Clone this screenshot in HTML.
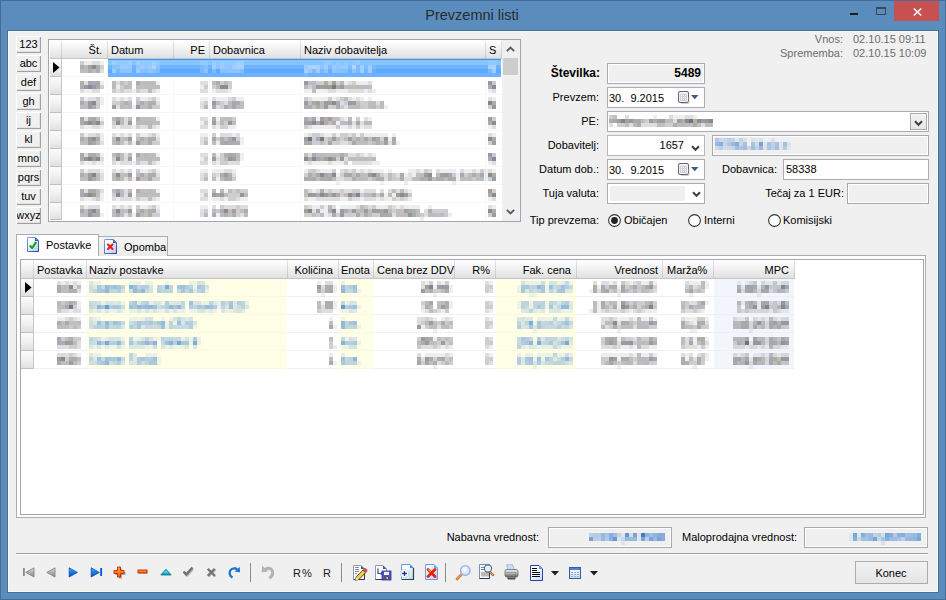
<!DOCTYPE html>
<html><head><meta charset="utf-8"><style>
html,body{margin:0;padding:0;}
body{width:946px;height:600px;position:relative;overflow:hidden;font-family:"Liberation Sans",sans-serif;font-size:11px;}
div{position:absolute;box-sizing:border-box;}
.t{white-space:pre;}
svg{overflow:visible;}
</style></head><body>
<div style="left:0px;top:0px;width:946px;height:600px;background:#5a8dbe;box-shadow:inset 0 0 0 1px #466e95;"></div>
<div class="t" style="left:272px;width:400px;text-align:center;top:7px;line-height:17px;font-size:15px;color:#2b2b2b;font-size:14.5px;">Prevzemni listi</div>
<div style="left:894px;top:1px;width:45px;height:20px;background:#c75050;"></div>
<svg style="position:absolute;left:913px;top:8px" width="9" height="8"><path d="M0.8 0.5L8.2 7.5M8.2 0.5L0.8 7.5" stroke="#fff" stroke-width="1.5"/></svg>
<div style="left:876px;top:7px;width:10px;height:8px;border:1px solid #36485a;border-top-width:2px;box-sizing:border-box;"></div>
<div style="left:850px;top:13px;width:8px;height:2px;background:#1e1e1e;"></div>
<div style="left:7px;top:30px;width:932px;height:563px;background:#44709c;"></div>
<div style="left:8px;top:31px;width:930px;height:561px;background:#f0f0f0;box-shadow:inset 0 0 0 1px #f8f8f8;"></div>
<div style="left:16px;top:36px;width:25px;height:17px;background:#f0f0f0;box-shadow:inset 1px 1px 0 #fff, inset -1px -1px 0 #a0a0a0, inset -2px -2px 0 #e3e3e3;overflow:hidden;"></div>
<div style="left:17px;top:37px;width:23px;height:15px;overflow:hidden"><div class="t" style="left:-188.5px;width:400px;text-align:center;top:1px;line-height:12px;font-size:11px;color:#000">123</div></div>
<div style="left:16px;top:55px;width:25px;height:17px;background:#f0f0f0;box-shadow:inset 1px 1px 0 #fff, inset -1px -1px 0 #a0a0a0, inset -2px -2px 0 #e3e3e3;overflow:hidden;"></div>
<div style="left:17px;top:56px;width:23px;height:15px;overflow:hidden"><div class="t" style="left:-188.5px;width:400px;text-align:center;top:1px;line-height:12px;font-size:11px;color:#000">abc</div></div>
<div style="left:16px;top:74px;width:25px;height:17px;background:#f0f0f0;box-shadow:inset 1px 1px 0 #fff, inset -1px -1px 0 #a0a0a0, inset -2px -2px 0 #e3e3e3;overflow:hidden;"></div>
<div style="left:17px;top:75px;width:23px;height:15px;overflow:hidden"><div class="t" style="left:-188.5px;width:400px;text-align:center;top:1px;line-height:12px;font-size:11px;color:#000">def</div></div>
<div style="left:16px;top:93px;width:25px;height:17px;background:#f0f0f0;box-shadow:inset 1px 1px 0 #fff, inset -1px -1px 0 #a0a0a0, inset -2px -2px 0 #e3e3e3;overflow:hidden;"></div>
<div style="left:17px;top:94px;width:23px;height:15px;overflow:hidden"><div class="t" style="left:-188.5px;width:400px;text-align:center;top:1px;line-height:12px;font-size:11px;color:#000">gh</div></div>
<div style="left:16px;top:112px;width:25px;height:17px;background:#f0f0f0;box-shadow:inset 1px 1px 0 #fff, inset -1px -1px 0 #a0a0a0, inset -2px -2px 0 #e3e3e3;overflow:hidden;"></div>
<div style="left:17px;top:113px;width:23px;height:15px;overflow:hidden"><div class="t" style="left:-188.5px;width:400px;text-align:center;top:1px;line-height:12px;font-size:11px;color:#000">ij</div></div>
<div style="left:16px;top:131px;width:25px;height:17px;background:#f0f0f0;box-shadow:inset 1px 1px 0 #fff, inset -1px -1px 0 #a0a0a0, inset -2px -2px 0 #e3e3e3;overflow:hidden;"></div>
<div style="left:17px;top:132px;width:23px;height:15px;overflow:hidden"><div class="t" style="left:-188.5px;width:400px;text-align:center;top:1px;line-height:12px;font-size:11px;color:#000">kl</div></div>
<div style="left:16px;top:150px;width:25px;height:17px;background:#f0f0f0;box-shadow:inset 1px 1px 0 #fff, inset -1px -1px 0 #a0a0a0, inset -2px -2px 0 #e3e3e3;overflow:hidden;"></div>
<div style="left:17px;top:151px;width:23px;height:15px;overflow:hidden"><div class="t" style="left:-188.5px;width:400px;text-align:center;top:1px;line-height:12px;font-size:11px;color:#000">mno</div></div>
<div style="left:16px;top:169px;width:25px;height:17px;background:#f0f0f0;box-shadow:inset 1px 1px 0 #fff, inset -1px -1px 0 #a0a0a0, inset -2px -2px 0 #e3e3e3;overflow:hidden;"></div>
<div style="left:17px;top:170px;width:23px;height:15px;overflow:hidden"><div class="t" style="left:-188.5px;width:400px;text-align:center;top:1px;line-height:12px;font-size:11px;color:#000">pqrs</div></div>
<div style="left:16px;top:188px;width:25px;height:17px;background:#f0f0f0;box-shadow:inset 1px 1px 0 #fff, inset -1px -1px 0 #a0a0a0, inset -2px -2px 0 #e3e3e3;overflow:hidden;"></div>
<div style="left:17px;top:189px;width:23px;height:15px;overflow:hidden"><div class="t" style="left:-188.5px;width:400px;text-align:center;top:1px;line-height:12px;font-size:11px;color:#000">tuv</div></div>
<div style="left:16px;top:207px;width:25px;height:17px;background:#f0f0f0;box-shadow:inset 1px 1px 0 #fff, inset -1px -1px 0 #a0a0a0, inset -2px -2px 0 #e3e3e3;overflow:hidden;"></div>
<div style="left:17px;top:208px;width:23px;height:15px;overflow:hidden"><div class="t" style="left:-188.5px;width:400px;text-align:center;top:1px;line-height:12px;font-size:11px;color:#000">wxyz</div></div>
<div style="left:48px;top:39px;width:473px;height:183px;background:#fff;border:1px solid #a3a6ae;box-sizing:border-box;"></div>
<div style="left:50px;top:41px;width:452px;height:17px;background:linear-gradient(#ffffff,#f4f4f4 40%,#e0e0e0);"></div>
<div style="left:50px;top:58px;width:452px;height:1px;background:#c5c5c5;"></div>
<div style="left:61px;top:41px;width:1px;height:17px;background:linear-gradient(#e6e6e6,#c5c5c5);"></div>
<div style="left:107px;top:41px;width:1px;height:17px;background:linear-gradient(#e6e6e6,#c5c5c5);"></div>
<div style="left:173px;top:41px;width:1px;height:17px;background:linear-gradient(#e6e6e6,#c5c5c5);"></div>
<div style="left:209px;top:41px;width:1px;height:17px;background:linear-gradient(#e6e6e6,#c5c5c5);"></div>
<div style="left:300px;top:41px;width:1px;height:17px;background:linear-gradient(#e6e6e6,#c5c5c5);"></div>
<div style="left:485px;top:41px;width:1px;height:17px;background:linear-gradient(#e6e6e6,#c5c5c5);"></div>
<div style="left:501px;top:41px;width:1px;height:17px;background:linear-gradient(#e6e6e6,#c5c5c5);"></div>
<div style="left:50px;top:59px;width:11px;height:18px;background:linear-gradient(#fbfbfb,#f0f0f0 50%,#dedede);box-shadow:inset 0 -1px 0 #c0c0c0;"></div>
<div style="left:50px;top:77px;width:11px;height:18px;background:linear-gradient(#fbfbfb,#f0f0f0 50%,#dedede);box-shadow:inset 0 -1px 0 #c0c0c0;"></div>
<div style="left:50px;top:95px;width:11px;height:18px;background:linear-gradient(#fbfbfb,#f0f0f0 50%,#dedede);box-shadow:inset 0 -1px 0 #c0c0c0;"></div>
<div style="left:50px;top:113px;width:11px;height:18px;background:linear-gradient(#fbfbfb,#f0f0f0 50%,#dedede);box-shadow:inset 0 -1px 0 #c0c0c0;"></div>
<div style="left:50px;top:131px;width:11px;height:18px;background:linear-gradient(#fbfbfb,#f0f0f0 50%,#dedede);box-shadow:inset 0 -1px 0 #c0c0c0;"></div>
<div style="left:50px;top:149px;width:11px;height:18px;background:linear-gradient(#fbfbfb,#f0f0f0 50%,#dedede);box-shadow:inset 0 -1px 0 #c0c0c0;"></div>
<div style="left:50px;top:167px;width:11px;height:18px;background:linear-gradient(#fbfbfb,#f0f0f0 50%,#dedede);box-shadow:inset 0 -1px 0 #c0c0c0;"></div>
<div style="left:50px;top:185px;width:11px;height:18px;background:linear-gradient(#fbfbfb,#f0f0f0 50%,#dedede);box-shadow:inset 0 -1px 0 #c0c0c0;"></div>
<div style="left:50px;top:203px;width:11px;height:17px;background:linear-gradient(#fbfbfb,#f0f0f0 50%,#dedede);box-shadow:inset 0 -1px 0 #c0c0c0;"></div>
<div style="left:61px;top:59px;width:1px;height:161px;background:#c5c5c5;"></div>
<div style="left:62px;top:76px;width:440px;height:1px;background:#f6f6f6;"></div>
<div style="left:62px;top:94px;width:440px;height:1px;background:#f6f6f6;"></div>
<div style="left:62px;top:112px;width:440px;height:1px;background:#f6f6f6;"></div>
<div style="left:62px;top:130px;width:440px;height:1px;background:#f6f6f6;"></div>
<div style="left:62px;top:148px;width:440px;height:1px;background:#f6f6f6;"></div>
<div style="left:62px;top:166px;width:440px;height:1px;background:#f6f6f6;"></div>
<div style="left:62px;top:184px;width:440px;height:1px;background:#f6f6f6;"></div>
<div style="left:62px;top:202px;width:440px;height:1px;background:#f6f6f6;"></div>
<div style="left:49px;top:40px;width:471px;height:1px;background:#fff;"></div>
<div style="left:107px;top:59px;width:1px;height:162px;background:#f7f7f7;"></div>
<div style="left:173px;top:59px;width:1px;height:162px;background:#f7f7f7;"></div>
<div style="left:209px;top:59px;width:1px;height:162px;background:#f7f7f7;"></div>
<div style="left:300px;top:59px;width:1px;height:162px;background:#f7f7f7;"></div>
<div style="left:485px;top:59px;width:1px;height:162px;background:#f7f7f7;"></div>
<div style="left:108px;top:59px;width:393px;height:18px;background:linear-gradient(#3399ff 0,#3399ff 1px,#88c4ff 1px,#88c4ff 6px,#70b4ff 6px,#70b4ff 10px,#5cabff 10px,#5cabff 14px,#6eb2ff 14px);"></div>
<svg style="position:absolute;left:53px;top:62px" width="7" height="12"><path d="M0 0L6.5 5.5L0 11z" fill="#000"/></svg>
<div class="t" style="left:-298px;width:400px;text-align:right;top:44px;line-height:12px;font-size:11px;color:#000;">Št.</div>
<div class="t" style="left:111px;top:44px;line-height:12px;font-size:11px;color:#000;">Datum</div>
<div class="t" style="left:-195px;width:400px;text-align:right;top:44px;line-height:12px;font-size:11px;color:#000;">PE</div>
<div class="t" style="left:213px;top:44px;line-height:12px;font-size:11px;color:#000;">Dobavnica</div>
<div class="t" style="left:304px;top:44px;line-height:12px;font-size:11px;color:#000;">Naziv dobavitelja</div>
<div class="t" style="left:489px;top:44px;line-height:12px;font-size:11px;color:#000;">S</div>
<div style="left:502px;top:40px;width:18px;height:181px;background:#f0f0f0;"></div>
<div style="left:503px;top:58px;width:15px;height:17px;background:#cdcdcd;"></div>
<svg style="position:absolute;left:506px;top:46px" width="9" height="6"><path d="M0.8 5.2L4.5 1.5L8.2 5.2" stroke="#5a5a5a" stroke-width="1.8" fill="none"/></svg>
<svg style="position:absolute;left:506px;top:209px" width="9" height="6"><path d="M0.8 0.8L4.5 4.5L8.2 0.8" stroke="#5a5a5a" stroke-width="1.8" fill="none"/></svg>
<div class="t" style="left:443px;width:400px;text-align:right;top:33px;line-height:12px;font-size:11px;color:#6d6d6d;">Vnos:</div>
<div class="t" style="left:853px;top:33px;line-height:12px;font-size:11px;color:#6d6d6d;">02.10.15 09:11</div>
<div class="t" style="left:443px;width:400px;text-align:right;top:47px;line-height:12px;font-size:11px;color:#6d6d6d;">Sprememba:</div>
<div class="t" style="left:853px;top:47px;line-height:12px;font-size:11px;color:#6d6d6d;">02.10.15 10:09</div>
<div class="t" style="left:200px;width:400px;text-align:right;top:66px;line-height:14px;font-size:12px;color:#000;font-weight:bold;">Številka:</div>
<div class="t" style="left:199px;width:400px;text-align:right;top:91px;line-height:12px;font-size:11px;color:#000;">Prevzem:</div>
<div class="t" style="left:199px;width:400px;text-align:right;top:115px;line-height:12px;font-size:11px;color:#000;">PE:</div>
<div class="t" style="left:199px;width:400px;text-align:right;top:139px;line-height:12px;font-size:11px;color:#000;">Dobavitelj:</div>
<div class="t" style="left:199px;width:400px;text-align:right;top:163px;line-height:12px;font-size:11px;color:#000;">Datum dob.:</div>
<div class="t" style="left:199px;width:400px;text-align:right;top:187px;line-height:12px;font-size:11px;color:#000;">Tuja valuta:</div>
<div class="t" style="left:199px;width:400px;text-align:right;top:214px;line-height:12px;font-size:11px;color:#000;">Tip prevzema:</div>
<div style="left:607px;top:63px;width:98px;height:21px;background:#f0f0f0;border:1px solid #a9a9b0;box-sizing:border-box;box-shadow:inset 0 0 0 1px #fff;"></div>
<div class="t" style="left:301px;width:400px;text-align:right;top:66px;line-height:14px;font-size:12px;color:#000;font-weight:bold;">5489</div>
<div style="left:607px;top:87px;width:98px;height:21px;background:#fff;border:1px solid #abadb3;box-sizing:border-box;"></div>
<div class="t" style="left:609px;top:92px;line-height:12px;font-size:11px;color:#000;">30.&nbsp; 9.2015</div>
<svg style="position:absolute;left:678px;top:91px" width="13" height="13"><rect x="0.5" y="0.5" width="10" height="11" rx="1.5" fill="#eef2f8" stroke="#6f6461"/><rect x="2" y="3" width="7" height="7" fill="#d0d4dc"/><g fill="#fff"><rect x="3" y="4" width="1" height="1"/><rect x="5" y="4" width="1" height="1"/><rect x="7" y="4" width="1" height="1"/><rect x="3" y="6" width="1" height="1"/><rect x="5" y="6" width="1" height="1"/><rect x="7" y="6" width="1" height="1"/><rect x="3" y="8" width="1" height="1"/><rect x="5" y="8" width="1" height="1"/><rect x="7" y="8" width="1" height="1"/></g><path d="M11 6v5.5q0 1-1 1h-7" stroke="#b0b0b0" fill="none" opacity="0.6"/></svg>
<svg style="position:absolute;left:691px;top:95px" width="8" height="5"><path d="M0 0h7.5L3.75 4.2z" fill="#3f5a82"/></svg>
<div style="left:607px;top:111px;width:322px;height:21px;background:#fff;border:1px solid #abadb3;box-sizing:border-box;"></div>
<div style="left:910px;top:113px;width:17px;height:17px;background:linear-gradient(#f2f2f2,#e6e6e6);border:1px solid #acacac;box-sizing:border-box;"></div>
<svg style="position:absolute;left:914px;top:120px" width="9" height="7"><path d="M1 1.2L4.5 4.8L8 1.2" stroke="#404040" stroke-width="2" fill="none"/></svg>
<div style="left:607px;top:135px;width:98px;height:21px;background:#fff;border:1px solid #b9b9b9;box-sizing:border-box;"></div>
<div class="t" style="left:284px;width:400px;text-align:right;top:139px;line-height:12px;font-size:11px;color:#000;">1657</div>
<svg style="position:absolute;left:691px;top:145px" width="9" height="7"><path d="M1 1.2L4.5 4.8L8 1.2" stroke="#404040" stroke-width="2" fill="none"/></svg>
<div style="left:712px;top:135px;width:217px;height:21px;background:#f0f0f0;border:1px solid #a9a9b0;box-sizing:border-box;box-shadow:inset 0 0 0 1px #fff;"></div>
<div style="left:607px;top:159px;width:98px;height:21px;background:#fff;border:1px solid #abadb3;box-sizing:border-box;"></div>
<div class="t" style="left:609px;top:164px;line-height:12px;font-size:11px;color:#000;">30.&nbsp; 9.2015</div>
<svg style="position:absolute;left:678px;top:163px" width="13" height="13"><rect x="0.5" y="0.5" width="10" height="11" rx="1.5" fill="#eef2f8" stroke="#6f6461"/><rect x="2" y="3" width="7" height="7" fill="#d0d4dc"/><g fill="#fff"><rect x="3" y="4" width="1" height="1"/><rect x="5" y="4" width="1" height="1"/><rect x="7" y="4" width="1" height="1"/><rect x="3" y="6" width="1" height="1"/><rect x="5" y="6" width="1" height="1"/><rect x="7" y="6" width="1" height="1"/><rect x="3" y="8" width="1" height="1"/><rect x="5" y="8" width="1" height="1"/><rect x="7" y="8" width="1" height="1"/></g><path d="M11 6v5.5q0 1-1 1h-7" stroke="#b0b0b0" fill="none" opacity="0.6"/></svg>
<svg style="position:absolute;left:691px;top:167px" width="8" height="5"><path d="M0 0h7.5L3.75 4.2z" fill="#3f5a82"/></svg>
<div class="t" style="left:377px;width:400px;text-align:right;top:163px;line-height:12px;font-size:11px;color:#000;">Dobavnica:</div>
<div style="left:783px;top:159px;width:146px;height:21px;background:#fff;border:1px solid #abadb3;box-sizing:border-box;"></div>
<div class="t" style="left:786px;top:163px;line-height:12px;font-size:11px;color:#000;">58338</div>
<div style="left:607px;top:183px;width:98px;height:21px;background:#fff;border:1px solid #abadb3;box-sizing:border-box;"></div>
<div style="left:610px;top:186px;width:75px;height:15px;background:#f0f0f0;"></div>
<svg style="position:absolute;left:692px;top:191px" width="9" height="7"><path d="M1 1.2L4.5 4.8L8 1.2" stroke="#404040" stroke-width="2" fill="none"/></svg>
<div class="t" style="left:444px;width:400px;text-align:right;top:187px;line-height:12px;font-size:11px;color:#000;">Tečaj za 1 EUR:</div>
<div style="left:847px;top:183px;width:82px;height:21px;background:#f0f0f0;border:1px solid #a9a9b0;box-sizing:border-box;box-shadow:inset 0 0 0 1px #fff;"></div>
<svg style="position:absolute;left:608px;top:214px" width="13" height="13"><circle cx="6.5" cy="6.5" r="5.9" fill="#fff" stroke="#333" stroke-width="1.1"/><circle cx="6.5" cy="6.5" r="3.4" fill="#222"/></svg>
<div class="t" style="left:624px;top:214px;line-height:12px;font-size:11px;color:#000;">Običajen</div>
<svg style="position:absolute;left:688px;top:214px" width="13" height="13"><circle cx="6.5" cy="6.5" r="5.9" fill="#fff" stroke="#333" stroke-width="1.1"/></svg>
<div class="t" style="left:704px;top:214px;line-height:12px;font-size:11px;color:#000;">Interni</div>
<svg style="position:absolute;left:768px;top:214px" width="13" height="13"><circle cx="6.5" cy="6.5" r="5.9" fill="#fff" stroke="#333" stroke-width="1.1"/></svg>
<div class="t" style="left:783px;top:214px;line-height:12px;font-size:11px;color:#000;">Komisijski</div>
<div style="left:16px;top:255px;width:910px;height:263px;background:#fff;border:1px solid #adadad;box-sizing:border-box;"></div>
<div style="left:98px;top:236px;width:70px;height:20px;background:linear-gradient(#f3f3f3,#ebebeb);border:1px solid #adadad;border-bottom:none;box-sizing:border-box;"></div>
<div style="left:16px;top:234px;width:83px;height:22px;background:#fff;border:1px solid #adadad;border-bottom:none;box-sizing:border-box;"></div>
<div style="left:17px;top:255px;width:81px;height:1px;background:#fff;"></div>
<svg style="position:absolute;left:27px;top:237px" width="12" height="15"><defs><linearGradient id="dgcheck" x1="0" y1="0" x2="1" y2="1"><stop offset="0.2" stop-color="#ffffff"/><stop offset="1" stop-color="#a8ccf8"/></linearGradient><linearGradient id="dgchecks" x1="0" y1="0" x2="1" y2="1"><stop offset="0" stop-color="#78a8f0"/><stop offset="1" stop-color="#383a90"/></linearGradient></defs><path d="M0.5 0.5H8.5L11.5 3.5V14.5H0.5Z" fill="url(#dgcheck)" stroke="url(#dgchecks)"/><path d="M8 0.5L11.5 4H8Z" fill="#3a4a9a"/><path d="M8.8 1.5L10 2.8H8.8Z" fill="#a0c8f8"/><path d="M2.8 8.6L5.2 11L9.2 5" stroke="#18a018" stroke-width="2.2" fill="none" stroke-linejoin="round"/></svg>
<div class="t" style="left:46px;top:239px;line-height:12px;font-size:11px;color:#000;">Postavke</div>
<svg style="position:absolute;left:104px;top:239px" width="13" height="15"><defs><linearGradient id="dgx" x1="0" y1="0" x2="1" y2="1"><stop offset="0.2" stop-color="#ffffff"/><stop offset="1" stop-color="#a8ccf8"/></linearGradient><linearGradient id="dgxs" x1="0" y1="0" x2="1" y2="1"><stop offset="0" stop-color="#78a8f0"/><stop offset="1" stop-color="#383a90"/></linearGradient></defs><path d="M0.5 0.5H9.5L12.5 3.5V14.5H0.5Z" fill="url(#dgx)" stroke="url(#dgxs)"/><path d="M9 0.5L12.5 4H9Z" fill="#3a4a9a"/><path d="M9.8 1.5L11 2.8H9.8Z" fill="#a0c8f8"/><path d="M4 5.5L8.5 10M8.5 5.5L4 10" stroke="#f01818" stroke-width="2.1" fill="none" stroke-linecap="round"/></svg>
<div class="t" style="left:124px;top:241px;line-height:12px;font-size:11px;color:#000;">Opomba</div>
<div style="left:20px;top:259px;width:904px;height:256px;background:#fff;border:1px solid #a3a6ae;box-sizing:border-box;"></div>
<div style="left:21px;top:260px;width:774px;height:18px;background:linear-gradient(#ffffff,#f4f4f4 40%,#e0e0e0);"></div>
<div style="left:21px;top:278px;width:774px;height:1px;background:#c5c5c5;"></div>
<div style="left:33px;top:260px;width:1px;height:18px;background:linear-gradient(#e6e6e6,#c5c5c5);"></div>
<div style="left:86px;top:260px;width:1px;height:18px;background:linear-gradient(#e6e6e6,#c5c5c5);"></div>
<div style="left:287px;top:260px;width:1px;height:18px;background:linear-gradient(#e6e6e6,#c5c5c5);"></div>
<div style="left:338px;top:260px;width:1px;height:18px;background:linear-gradient(#e6e6e6,#c5c5c5);"></div>
<div style="left:373px;top:260px;width:1px;height:18px;background:linear-gradient(#e6e6e6,#c5c5c5);"></div>
<div style="left:454px;top:260px;width:1px;height:18px;background:linear-gradient(#e6e6e6,#c5c5c5);"></div>
<div style="left:495px;top:260px;width:1px;height:18px;background:linear-gradient(#e6e6e6,#c5c5c5);"></div>
<div style="left:576px;top:260px;width:1px;height:18px;background:linear-gradient(#e6e6e6,#c5c5c5);"></div>
<div style="left:662px;top:260px;width:1px;height:18px;background:linear-gradient(#e6e6e6,#c5c5c5);"></div>
<div style="left:713px;top:260px;width:1px;height:18px;background:linear-gradient(#e6e6e6,#c5c5c5);"></div>
<div style="left:794px;top:260px;width:1px;height:18px;background:linear-gradient(#e6e6e6,#c5c5c5);"></div>
<div style="left:21px;top:279px;width:12px;height:18px;background:linear-gradient(#fbfbfb,#f0f0f0 50%,#dedede);box-shadow:inset 0 -1px 0 #c0c0c0;"></div>
<div style="left:21px;top:297px;width:12px;height:18px;background:linear-gradient(#fbfbfb,#f0f0f0 50%,#dedede);box-shadow:inset 0 -1px 0 #c0c0c0;"></div>
<div style="left:21px;top:315px;width:12px;height:18px;background:linear-gradient(#fbfbfb,#f0f0f0 50%,#dedede);box-shadow:inset 0 -1px 0 #c0c0c0;"></div>
<div style="left:21px;top:333px;width:12px;height:18px;background:linear-gradient(#fbfbfb,#f0f0f0 50%,#dedede);box-shadow:inset 0 -1px 0 #c0c0c0;"></div>
<div style="left:21px;top:351px;width:12px;height:18px;background:linear-gradient(#fbfbfb,#f0f0f0 50%,#dedede);box-shadow:inset 0 -1px 0 #c0c0c0;"></div>
<div style="left:33px;top:279px;width:1px;height:90px;background:#c5c5c5;"></div>
<div style="left:34px;top:296px;width:761px;height:1px;background:#f6f6f6;"></div>
<div style="left:34px;top:314px;width:761px;height:1px;background:#f6f6f6;"></div>
<div style="left:34px;top:332px;width:761px;height:1px;background:#f6f6f6;"></div>
<div style="left:34px;top:350px;width:761px;height:1px;background:#f6f6f6;"></div>
<div style="left:34px;top:368px;width:761px;height:1px;background:#f6f6f6;"></div>
<div style="left:87px;top:279px;width:200px;height:90px;background:#ffffe8;"></div>
<div style="left:339px;top:279px;width:34px;height:90px;background:#ffffe8;"></div>
<div style="left:496px;top:279px;width:80px;height:90px;background:#ffffe8;"></div>
<div style="left:714px;top:279px;width:80px;height:90px;background:#f2f6fc;"></div>
<div style="left:34px;top:296px;width:760px;height:1px;background:rgba(0,0,0,0.025);"></div>
<div style="left:34px;top:314px;width:760px;height:1px;background:rgba(0,0,0,0.025);"></div>
<div style="left:34px;top:332px;width:760px;height:1px;background:rgba(0,0,0,0.025);"></div>
<div style="left:34px;top:350px;width:760px;height:1px;background:rgba(0,0,0,0.025);"></div>
<div style="left:34px;top:368px;width:760px;height:1px;background:rgba(0,0,0,0.025);"></div>
<svg style="position:absolute;left:25px;top:282px" width="7" height="12"><path d="M0 0L6.5 5.5L0 11z" fill="#000"/></svg>
<div class="t" style="left:37px;top:264px;line-height:12px;font-size:11px;color:#000;">Postavka</div>
<div class="t" style="left:89px;top:264px;line-height:12px;font-size:11px;color:#000;">Naziv postavke</div>
<div class="t" style="left:-67px;width:400px;text-align:right;top:264px;line-height:12px;font-size:11px;color:#000;">Količina</div>
<div class="t" style="left:341px;top:264px;line-height:12px;font-size:11px;color:#000;">Enota</div>
<div class="t" style="left:377px;top:264px;line-height:12px;font-size:11px;color:#000;">Cena brez DDV</div>
<div class="t" style="left:90px;width:400px;text-align:right;top:264px;line-height:12px;font-size:11px;color:#000;">R%</div>
<div class="t" style="left:171px;width:400px;text-align:right;top:264px;line-height:12px;font-size:11px;color:#000;">Fak. cena</div>
<div class="t" style="left:258px;width:400px;text-align:right;top:264px;line-height:12px;font-size:11px;color:#000;">Vrednost</div>
<div class="t" style="left:667px;top:264px;line-height:12px;font-size:11px;color:#000;">Marža%</div>
<div class="t" style="left:389px;width:400px;text-align:right;top:264px;line-height:12px;font-size:11px;color:#000;">MPC</div>
<div class="t" style="left:139px;width:400px;text-align:right;top:531px;line-height:12px;font-size:11px;color:#000;">Nabavna vrednost:</div>
<div style="left:548px;top:527px;width:124px;height:21px;background:#f0f0f0;border:1px solid #a9a9b0;box-sizing:border-box;box-shadow:inset 0 0 0 1px #fff;"></div>
<div class="t" style="left:397px;width:400px;text-align:right;top:531px;line-height:12px;font-size:11px;color:#000;">Maloprodajna vrednost:</div>
<div style="left:804px;top:527px;width:124px;height:21px;background:#f0f0f0;border:1px solid #a9a9b0;box-sizing:border-box;box-shadow:inset 0 0 0 1px #fff;"></div>
<div style="left:16px;top:553px;width:912px;height:1px;background:#a0a0a0;"></div>
<div style="left:16px;top:554px;width:912px;height:1px;background:#ffffff;"></div>
<svg style="position:absolute;left:0px;top:0px" width="0" height="0"><defs><filter id="sh" x="-20%" y="-20%" width="160%" height="160%"><feGaussianBlur stdDeviation="0.6"/></filter><linearGradient id="gg" x1="0" y1="0" x2="0" y2="1"><stop offset="0" stop-color="#d8d8d8"/><stop offset="1" stop-color="#8a8a8a"/></linearGradient><linearGradient id="bg" x1="0" y1="0" x2="0" y2="1"><stop offset="0" stop-color="#5ab0ff"/><stop offset="0.5" stop-color="#1a78e0"/><stop offset="1" stop-color="#0050c0"/></linearGradient><linearGradient id="og" x1="0" y1="0" x2="0" y2="1"><stop offset="0" stop-color="#ffa040"/><stop offset="1" stop-color="#ff6000"/></linearGradient><radialGradient id="tg" cx="0.5" cy="0.45" r="0.5"><stop offset="0" stop-color="#40e8ff"/><stop offset="1" stop-color="#108aa8"/></radialGradient></defs></svg>
<svg style="position:absolute;left:22px;top:567px" width="14" height="11"><rect x="1" y="1" width="1.8" height="8" fill="#8c8c8c"/><path d="M12 0.8V10L3.8 5.4Z" fill="url(#gg)" stroke="#7c7c7c" stroke-width="0.8" stroke-linejoin="round"/></svg>
<svg style="position:absolute;left:45px;top:567px" width="12" height="11"><path d="M10 0.8V10L1.8 5.4Z" fill="url(#gg)" stroke="#7c7c7c" stroke-width="0.8" stroke-linejoin="round"/></svg>
<svg style="position:absolute;left:68px;top:567px" width="12" height="11"><path d="M1.2 0.8V10L9.4 5.4Z" fill="url(#bg)" stroke="#0a4cb8" stroke-width="0.8" stroke-linejoin="round"/></svg>
<svg style="position:absolute;left:90px;top:567px" width="14" height="11"><path d="M1.2 0.8V10L9.4 5.4Z" fill="url(#bg)" stroke="#0a4cb8" stroke-width="0.8" stroke-linejoin="round"/><rect x="10.2" y="1" width="1.9" height="8" fill="#0a5ad0"/></svg>
<svg style="position:absolute;left:113px;top:566px" width="13" height="13"><path d="M5 1.5h3v3.5h3.5v3h-3.5v3.5h-3v-3.5h-3.5v-3h3.5z" fill="#000" opacity="0.3" transform="translate(1,1)" filter="url(#sh)"/><path d="M4.5 1h3v3.5h3.5v3h-3.5v3.5h-3v-3.5h-3.5v-3h3.5z" fill="url(#og)" stroke="#c02800" stroke-width="0.9"/></svg>
<svg style="position:absolute;left:137px;top:569px" width="12" height="7"><rect x="1.5" y="1.5" width="9" height="3" fill="#000" opacity="0.3" filter="url(#sh)"/><rect x="1" y="1" width="9" height="3" fill="url(#og)" stroke="#c02800" stroke-width="0.9"/></svg>
<svg style="position:absolute;left:160px;top:568px" width="13" height="9"><path d="M6 1.2L11.2 7H0.8Z" fill="url(#tg)" stroke="#0a7890" stroke-width="0.8" stroke-linejoin="round"/></svg>
<svg style="position:absolute;left:182px;top:566px" width="13" height="12"><path d="M2.2 6.8L5 9.5L11 3" stroke="#000" opacity="0.25" stroke-width="2.4" fill="none" filter="url(#sh)"/><path d="M1.5 5.5L4.3 8.3L10.5 1.5" stroke="#707070" stroke-width="2.3" fill="none"/></svg>
<svg style="position:absolute;left:206px;top:567px" width="12" height="11"><path d="M2.5 2.5L9.5 9.5M9.5 2.5L2.5 9.5" stroke="#000" opacity="0.25" stroke-width="2.4" fill="none" filter="url(#sh)"/><path d="M1.7 1.7L8.7 8.7M8.7 1.7L1.7 8.7" stroke="#747474" stroke-width="2.3" fill="none"/></svg>
<svg style="position:absolute;left:228px;top:566px" width="14" height="13"><path d="M4.5 11.5C1.5 10 1 6.5 2.5 4.2C4.2 1.6 7.8 1.8 9.3 3.8" stroke="#1c74d0" stroke-width="2.3" fill="none"/><path d="M6.8 5.8L12 6.2L11.8 0.8Z" fill="#1c74d0"/></svg>
<div style="left:250px;top:563px;width:1px;height:19px;background:#8c8c8c;"></div>
<svg style="position:absolute;left:261px;top:565px" width="15" height="15"><path d="M8.2 13C11.6 11.8 12.6 7.6 10.8 5C9 2.6 5.6 2.8 4.2 4.6" stroke="#b2b2b2" stroke-width="3" fill="none"/><path d="M7.2 6.6L0.6 7.2L1.2 0.6Z" fill="#b2b2b2"/></svg>
<div class="t" style="left:293px;top:567px;line-height:12px;font-size:11px;color:#1a1a1a;letter-spacing:1px;">R%</div>
<div class="t" style="left:323px;top:567px;line-height:12px;font-size:11px;color:#1a1a1a;">R</div>
<div style="left:341px;top:563px;width:1px;height:19px;background:#8c8c8c;"></div>
<svg style="position:absolute;left:353px;top:565px" width="15" height="17"><path d="M0.5 0.5H8L11.5 4V14.5H0.5Z" fill="#fdfdfd" stroke="#8a9ac0"/><path d="M0.5 14.5H11.5V9" stroke="#303a58" fill="none"/><path d="M8 0.5L11.5 4H8Z" fill="#405890"/><g stroke="#8a8a8a"><path d="M2 2.5h4M2 4.5h4M2 6.5h4M2 8.5h2"/></g><g transform="translate(-0.8,-0.6)"><path d="M3.2 15.8L4 12.5L10.8 5.7L13.4 8.3L6.6 15.1Z" fill="#f4d040" stroke="#202020" stroke-width="0.8"/><path d="M10.8 5.7L12 4.5Q13 3.8 14 4.6L14.6 5.2Q15.2 6.2 14.5 7.2L13.4 8.3Z" fill="#d85a40" stroke="#8a3020" stroke-width="0.6"/><path d="M3.2 15.8L4 12.5L5 14.2L6.6 15.1Z" fill="#f0e8d8"/></g></svg>
<svg style="position:absolute;left:375px;top:565px" width="17" height="17"><path d="M0.5 0.5H8L11.5 4V14.5H0.5Z" fill="#fdfdfd" stroke="#8a9ac0"/><path d="M0.5 14.5H7" stroke="#303a58"/><path d="M8 0.5L11.5 4H8Z" fill="#405890"/><path d="M3 3.5V8.5H6.5" stroke="#3a4a7a" stroke-width="1.2" fill="none"/><path d="M5.8 6.8L7.8 8.5L5.8 10.2Z" fill="#3a4a7a"/><g transform="translate(-0.5,-1.5)"><rect x="7.5" y="7.5" width="9" height="9" fill="#5050c8" stroke="#30308a" stroke-width="0.8"/><rect x="9.5" y="8.3" width="5" height="3.2" fill="#f4f4fc"/><rect x="9.5" y="13" width="5" height="3" fill="#505060"/><rect x="12" y="13.5" width="1.5" height="2" fill="#c8c8d0"/></g></svg>
<svg style="position:absolute;left:400px;top:564px" width="16" height="17"><defs><linearGradient id="ndg" x1="0" y1="0" x2="1" y2="1"><stop offset="0.3" stop-color="#ffffff"/><stop offset="1" stop-color="#a8d8f8"/></linearGradient></defs><path d="M1.5 0.5H10L13.5 4V15.5H1.5Z" fill="url(#ndg)" stroke="#5a8ae8" stroke-width="0.9"/><path d="M13.5 4V15.5H2" stroke="#3a4040" stroke-width="1.2" fill="none"/><path d="M10 0.5L13.5 4H10Z" fill="#3a90f0"/><circle cx="4.5" cy="9.5" r="4.2" fill="#fafcff" fill-opacity="0.85" stroke="#a8d0a0" stroke-width="0.9" stroke-dasharray="1.2 0.6"/><path d="M4.5 7v5M2 9.5h5" stroke="#2030a0" stroke-width="1.3"/></svg>
<svg style="position:absolute;left:425px;top:564px" width="14" height="17"><defs><linearGradient id="xdg" x1="0" y1="0" x2="1" y2="1"><stop offset="0.2" stop-color="#f4f8ff"/><stop offset="1" stop-color="#a8d0f8"/></linearGradient></defs><path d="M0.5 0.5H9L12.5 4V15.5H0.5Z" fill="url(#xdg)" stroke="#7a98d8"/><path d="M9 0.5L12.5 4H9Z" fill="#6ab0f0"/><path d="M3 5.5L10 12.5M10 5.5L3 12.5" stroke="#f02000" stroke-width="2.8" stroke-linecap="round"/><path d="M3.5 5.5L5.5 7.5" stroke="#ff9040" stroke-width="1.2" stroke-linecap="round"/></svg>
<div style="left:445px;top:563px;width:1px;height:19px;background:#8c8c8c;"></div>
<svg style="position:absolute;left:455px;top:564px" width="17" height="17"><defs><radialGradient id="lg" cx="0.45" cy="0.4" r="0.6"><stop offset="0" stop-color="#ffffff"/><stop offset="1" stop-color="#b8dcf8"/></radialGradient></defs><path d="M6.6 10.4L2 15" stroke="#c86a10" stroke-width="2.6" stroke-linecap="round"/><path d="M6.4 10.6L2 15" stroke="#f8a040" stroke-width="1.4" stroke-linecap="round"/><circle cx="10.3" cy="6.5" r="4.8" fill="url(#lg)" stroke="#98aef0" stroke-width="1.3"/></svg>
<svg style="position:absolute;left:479px;top:564px" width="17" height="16"><path d="M0.5 0.5H10.5V14.5H0.5Z" fill="#f4f8fc" stroke="#7a90b8"/><path d="M0.5 14.5H10.5V8" stroke="#2a3a5a" fill="none"/><path d="M2 3.5h4M2 5.5h3" stroke="#6a80b0"/><rect x="2" y="8" width="8" height="4.5" fill="#b8b8b8"/><path d="M10.5 7.5L14 11" stroke="#8a4a10" stroke-width="2.4" stroke-linecap="round"/><path d="M10.5 7.5L14 11" stroke="#f0a040" stroke-width="1.2" stroke-linecap="round"/><circle cx="9" cy="4.5" r="3.6" fill="#e4f0fc" stroke="#5a6a7a" stroke-width="1.1"/></svg>
<svg style="position:absolute;left:504px;top:564px" width="15" height="16"><defs><linearGradient id="pg" x1="0" y1="0" x2="0" y2="1"><stop offset="0" stop-color="#f0f0f0"/><stop offset="0.5" stop-color="#b8b8b8"/><stop offset="1" stop-color="#5a5a5a"/></linearGradient></defs><path d="M2.5 0.8H8.5L10.5 6H4Z" fill="#c8e0fc" stroke="#90a8c8" stroke-width="0.7"/><path d="M1 7Q1 5.5 3 5.5H12Q14 5.5 14 7.5V11.5Q14 13 12 13H3Q1 13 1 11.5Z" fill="url(#pg)" stroke="#6a6a6a" stroke-width="0.8"/><path d="M3 13.5H12L11 15.5H4Z" fill="#4a4a4a"/><path d="M2.5 8.5h10" stroke="#909090" stroke-width="0.8"/><circle cx="11.5" cy="10" r="0.7" fill="#30c030"/></svg>
<svg style="position:absolute;left:530px;top:565px" width="13" height="16"><defs><linearGradient id="dlg" x1="0" y1="0" x2="1" y2="1"><stop offset="0.3" stop-color="#ffffff"/><stop offset="1" stop-color="#c0d8f8"/></linearGradient></defs><path d="M0.5 0.5H9L12.5 4V15.5H0.5Z" fill="url(#dlg)" stroke="#2a40b0"/><path d="M9 0.5L12.5 4H9Z" fill="#6a90e0"/><g stroke="#000" stroke-width="1"><path d="M2 3.5h5M2 5.5h5M2 7.5h8M2 9.5h8M2 11.5h8"/></g></svg>
<svg style="position:absolute;left:551px;top:571px" width="8" height="5"><path d="M0 0h8L4 4.5z" fill="#202020"/></svg>
<svg style="position:absolute;left:569px;top:567px" width="13" height="12"><defs><linearGradient id="tbg" x1="0" y1="0" x2="0" y2="1"><stop offset="0" stop-color="#ffffff"/><stop offset="1" stop-color="#c8d8f0"/></linearGradient></defs><rect x="0.5" y="0.5" width="11" height="11" fill="url(#tbg)" stroke="#3a5a98"/><rect x="1" y="1" width="10" height="2" fill="#4a80e0"/><g fill="#98aed8"><rect x="2" y="5" width="2" height="1"/><rect x="5" y="5" width="2" height="1"/><rect x="8" y="5" width="2" height="1"/><rect x="2" y="7" width="2" height="1"/><rect x="5" y="7" width="2" height="1"/><rect x="8" y="7" width="2" height="1"/><rect x="2" y="9" width="2" height="1"/><rect x="5" y="9" width="2" height="1"/><rect x="8" y="9" width="2" height="1"/></g></svg>
<svg style="position:absolute;left:590px;top:571px" width="8" height="5"><path d="M0 0h8L4 4.5z" fill="#202020"/></svg>
<div style="left:855px;top:561px;width:73px;height:23px;background:linear-gradient(#f2f2f2,#e5e5e5);border:1px solid #acacac;box-sizing:border-box;"></div>
<div class="t" style="left:691px;width:400px;text-align:center;top:567px;line-height:12px;font-size:11px;color:#000;">Konec</div>
<svg width="946" height="600" style="position:absolute;left:0;top:0"><path fill="#50505c" fill-opacity="0.10" d="M116 85h4v4h-4zM156 89h4v4h-4zM344 89h4v4h-4zM372 89h4v4h-4zM84 97h4v4h-4zM100 101h4v4h-4zM316 117h4v4h-4zM336 121h4v4h-4zM88 125h4v4h-4zM84 133h4v4h-4zM140 133h4v4h-4zM144 133h4v4h-4zM100 137h4v4h-4zM216 141h4v4h-4zM372 153h4v4h-4zM88 161h4v4h-4zM96 161h4v4h-4zM124 169h4v4h-4zM204 169h4v4h-4zM444 169h4v4h-4zM484 169h4v4h-4zM456 173h4v4h-4zM404 181h4v4h-4zM156 189h4v4h-4zM100 193h4v4h-4zM88 197h4v4h-4zM156 197h4v4h-4zM212 197h4v4h-4zM216 197h4v4h-4zM340 197h4v4h-4zM408 197h4v4h-4zM316 205h4v4h-4zM324 205h4v4h-4zM344 205h4v4h-4zM404 205h4v4h-4zM320 209h4v4h-4zM100 213h4v4h-4z"/><path fill="#50505c" fill-opacity="0.20" d="M116 81h4v4h-4zM128 97h4v4h-4zM340 101h4v4h-4zM216 105h4v4h-4zM200 117h4v4h-4zM348 125h4v4h-4zM220 133h4v4h-4zM488 133h4v4h-4zM84 153h4v4h-4zM308 153h4v4h-4zM100 157h4v4h-4zM124 157h4v4h-4zM80 161h4v4h-4zM112 161h4v4h-4zM152 161h4v4h-4zM200 161h4v4h-4zM204 161h4v4h-4zM212 161h4v4h-4zM236 161h4v4h-4zM492 161h4v4h-4zM88 169h4v4h-4zM112 169h4v4h-4zM128 169h4v4h-4zM460 169h4v4h-4zM384 177h4v4h-4zM408 177h4v4h-4zM124 189h4v4h-4zM308 189h4v4h-4zM388 189h4v4h-4zM112 197h4v4h-4zM332 197h4v4h-4zM364 197h4v4h-4zM404 197h4v4h-4zM308 205h4v4h-4zM312 209h4v4h-4zM200 213h4v4h-4z"/><path fill="#50505c" fill-opacity="0.30" d="M492 81h4v4h-4zM80 97h4v4h-4zM152 105h4v4h-4zM340 105h4v4h-4zM360 105h4v4h-4zM100 121h4v4h-4zM336 125h4v4h-4zM80 133h4v4h-4zM352 133h4v4h-4zM368 141h4v4h-4zM492 153h4v4h-4zM136 161h4v4h-4zM136 169h4v4h-4zM312 169h4v4h-4zM152 177h4v4h-4zM472 177h4v4h-4zM204 193h4v4h-4zM408 193h4v4h-4zM364 205h4v4h-4zM216 209h4v4h-4zM348 213h4v4h-4zM360 213h4v4h-4zM420 213h4v4h-4zM444 213h4v4h-4z"/><path fill="#50505c" fill-opacity="0.40" d="M84 65h4v4h-4zM112 81h4v4h-4zM224 81h4v4h-4zM340 81h4v4h-4zM112 85h4v4h-4zM216 85h4v4h-4zM304 85h4v4h-4zM356 85h4v4h-4zM128 101h4v4h-4zM380 101h4v4h-4zM120 105h4v4h-4zM128 105h4v4h-4zM204 105h4v4h-4zM228 105h4v4h-4zM372 105h4v4h-4zM112 117h4v4h-4zM120 117h4v4h-4zM136 121h4v4h-4zM144 121h4v4h-4zM148 121h4v4h-4zM220 121h4v4h-4zM364 121h4v4h-4zM368 121h4v4h-4zM148 125h4v4h-4zM144 153h4v4h-4zM212 153h4v4h-4zM320 153h4v4h-4zM148 157h4v4h-4zM372 157h4v4h-4zM220 189h4v4h-4zM120 193h4v4h-4zM144 193h4v4h-4zM328 205h4v4h-4zM360 209h4v4h-4zM140 213h4v4h-4zM204 213h4v4h-4zM404 213h4v4h-4z"/><path fill="#50505c" fill-opacity="0.50" d="M88 81h4v4h-4zM96 81h4v4h-4zM96 85h4v4h-4zM232 101h4v4h-4zM312 101h4v4h-4zM232 105h4v4h-4zM80 117h4v4h-4zM92 117h4v4h-4zM116 117h4v4h-4zM312 117h4v4h-4zM356 121h4v4h-4zM212 137h4v4h-4zM364 137h4v4h-4zM392 137h4v4h-4zM92 141h4v4h-4zM224 141h4v4h-4zM308 141h4v4h-4zM328 141h4v4h-4zM352 141h4v4h-4zM80 153h4v4h-4zM116 153h4v4h-4zM136 153h4v4h-4zM228 153h4v4h-4zM316 157h4v4h-4zM316 173h4v4h-4zM324 173h4v4h-4zM344 173h4v4h-4zM348 173h4v4h-4zM356 173h4v4h-4zM448 173h4v4h-4zM148 177h4v4h-4zM328 177h4v4h-4zM116 189h4v4h-4zM216 193h4v4h-4zM352 193h4v4h-4zM80 209h4v4h-4zM316 209h4v4h-4zM380 209h4v4h-4zM408 209h4v4h-4zM380 213h4v4h-4z"/><path fill="#50505c" fill-opacity="0.60" d="M488 81h4v4h-4zM136 105h4v4h-4zM492 105h4v4h-4zM228 121h4v4h-4zM232 137h4v4h-4zM384 137h4v4h-4zM84 157h4v4h-4zM228 157h4v4h-4zM240 193h4v4h-4zM308 193h4v4h-4zM332 193h4v4h-4zM384 209h4v4h-4zM88 213h4v4h-4zM408 213h4v4h-4z"/><path fill="#50505c" fill-opacity="0.70" d="M488 101h4v4h-4zM88 157h4v4h-4zM92 173h4v4h-4zM356 193h4v4h-4zM308 209h4v4h-4z"/><path fill="#50505c" fill-opacity="0.80" d="M308 137h4v4h-4z"/><path fill="#5f585f" fill-opacity="0.10" d="M100 81h4v4h-4zM84 89h4v4h-4zM236 97h4v4h-4zM132 105h4v4h-4zM384 105h4v4h-4zM200 121h4v4h-4zM232 125h4v4h-4zM328 125h4v4h-4zM344 125h4v4h-4zM232 133h4v4h-4zM304 133h4v4h-4zM364 133h4v4h-4zM384 133h4v4h-4zM492 133h4v4h-4zM240 137h4v4h-4zM100 153h4v4h-4zM364 153h4v4h-4zM200 157h4v4h-4zM216 161h4v4h-4zM320 161h4v4h-4zM488 161h4v4h-4zM216 169h4v4h-4zM320 169h4v4h-4zM356 169h4v4h-4zM468 169h4v4h-4zM408 189h4v4h-4zM200 193h4v4h-4zM392 193h4v4h-4zM312 197h4v4h-4zM116 205h4v4h-4zM144 205h4v4h-4zM156 205h4v4h-4zM200 205h4v4h-4zM380 205h4v4h-4zM416 205h4v4h-4zM336 209h4v4h-4z"/><path fill="#5f585f" fill-opacity="0.20" d="M96 61h4v4h-4zM124 89h4v4h-4zM200 89h4v4h-4zM220 89h4v4h-4zM332 89h4v4h-4zM120 97h4v4h-4zM148 97h4v4h-4zM348 97h4v4h-4zM224 101h4v4h-4zM344 105h4v4h-4zM124 117h4v4h-4zM352 121h4v4h-4zM148 133h4v4h-4zM320 133h4v4h-4zM348 133h4v4h-4zM368 153h4v4h-4zM344 157h4v4h-4zM92 161h4v4h-4zM120 161h4v4h-4zM232 161h4v4h-4zM364 161h4v4h-4zM148 169h4v4h-4zM428 169h4v4h-4zM232 173h4v4h-4zM316 189h4v4h-4zM332 189h4v4h-4zM380 189h4v4h-4zM336 197h4v4h-4zM368 197h4v4h-4zM228 205h4v4h-4zM356 205h4v4h-4z"/><path fill="#5f585f" fill-opacity="0.30" d="M220 81h4v4h-4zM228 85h4v4h-4zM152 97h4v4h-4zM232 97h4v4h-4zM112 101h4v4h-4zM316 133h4v4h-4zM360 133h4v4h-4zM216 137h4v4h-4zM348 141h4v4h-4zM220 153h4v4h-4zM204 157h4v4h-4zM336 157h4v4h-4zM220 161h4v4h-4zM80 169h4v4h-4zM152 169h4v4h-4zM232 177h4v4h-4zM368 177h4v4h-4zM232 189h4v4h-4zM352 189h4v4h-4zM228 193h4v4h-4zM232 193h4v4h-4zM360 193h4v4h-4zM348 197h4v4h-4zM136 205h4v4h-4zM236 205h4v4h-4zM304 205h4v4h-4zM316 213h4v4h-4z"/><path fill="#5f585f" fill-opacity="0.40" d="M84 69h4v4h-4zM152 81h4v4h-4zM348 85h4v4h-4zM216 101h4v4h-4zM320 101h4v4h-4zM80 105h4v4h-4zM144 105h4v4h-4zM128 117h4v4h-4zM152 117h4v4h-4zM220 117h4v4h-4zM332 117h4v4h-4zM152 121h4v4h-4zM144 137h4v4h-4zM344 137h4v4h-4zM352 137h4v4h-4zM84 141h4v4h-4zM360 141h4v4h-4zM380 141h4v4h-4zM120 153h4v4h-4zM148 153h4v4h-4zM152 153h4v4h-4zM324 153h4v4h-4zM328 153h4v4h-4zM332 153h4v4h-4zM224 157h4v4h-4zM236 157h4v4h-4zM360 157h4v4h-4zM148 161h4v4h-4zM84 173h4v4h-4zM360 173h4v4h-4zM476 173h4v4h-4zM84 177h4v4h-4zM204 177h4v4h-4zM220 177h4v4h-4zM356 177h4v4h-4zM412 177h4v4h-4zM432 177h4v4h-4zM476 177h4v4h-4zM228 189h4v4h-4zM392 189h4v4h-4zM96 193h4v4h-4zM344 193h4v4h-4zM368 193h4v4h-4zM112 209h4v4h-4zM144 209h4v4h-4zM348 209h4v4h-4zM356 209h4v4h-4zM368 209h4v4h-4zM120 213h4v4h-4zM128 213h4v4h-4zM220 213h4v4h-4zM368 213h4v4h-4zM428 213h4v4h-4z"/><path fill="#5f585f" fill-opacity="0.50" d="M140 101h4v4h-4zM236 101h4v4h-4zM492 101h4v4h-4zM304 105h4v4h-4zM88 117h4v4h-4zM348 121h4v4h-4zM152 137h4v4h-4zM220 141h4v4h-4zM232 141h4v4h-4zM236 141h4v4h-4zM80 157h4v4h-4zM308 157h4v4h-4zM80 173h4v4h-4zM148 173h4v4h-4zM472 173h4v4h-4zM228 177h4v4h-4zM376 177h4v4h-4zM420 177h4v4h-4zM452 177h4v4h-4zM92 189h4v4h-4zM336 193h4v4h-4zM220 209h4v4h-4zM244 209h4v4h-4zM344 209h4v4h-4zM492 209h4v4h-4zM356 213h4v4h-4z"/><path fill="#5f585f" fill-opacity="0.60" d="M352 101h4v4h-4zM88 105h4v4h-4zM328 117h4v4h-4zM84 121h4v4h-4zM88 173h4v4h-4zM488 189h4v4h-4zM220 193h4v4h-4zM324 193h4v4h-4zM404 193h4v4h-4zM340 209h4v4h-4z"/><path fill="#5f585f" fill-opacity="0.70" d="M312 121h4v4h-4zM116 137h4v4h-4zM304 157h4v4h-4zM116 173h4v4h-4zM488 173h4v4h-4zM116 209h4v4h-4z"/><path fill="#646054" fill-opacity="0.10" d="M84 61h4v4h-4zM100 61h4v4h-4zM360 81h4v4h-4zM132 89h4v4h-4zM316 89h4v4h-4zM320 89h4v4h-4zM364 89h4v4h-4zM200 97h4v4h-4zM204 97h4v4h-4zM312 97h4v4h-4zM316 97h4v4h-4zM320 97h4v4h-4zM332 97h4v4h-4zM312 125h4v4h-4zM324 125h4v4h-4zM488 125h4v4h-4zM124 133h4v4h-4zM204 133h4v4h-4zM328 133h4v4h-4zM356 133h4v4h-4zM380 133h4v4h-4zM240 153h4v4h-4zM240 157h4v4h-4zM84 161h4v4h-4zM156 161h4v4h-4zM332 161h4v4h-4zM340 161h4v4h-4zM372 161h4v4h-4zM376 161h4v4h-4zM388 169h4v4h-4zM408 169h4v4h-4zM412 169h4v4h-4zM440 169h4v4h-4zM336 173h4v4h-4zM216 177h4v4h-4zM456 177h4v4h-4zM380 181h4v4h-4zM224 189h4v4h-4zM360 189h4v4h-4zM384 193h4v4h-4zM308 197h4v4h-4zM388 197h4v4h-4zM488 197h4v4h-4zM352 205h4v4h-4zM396 205h4v4h-4zM408 205h4v4h-4zM492 205h4v4h-4z"/><path fill="#646054" fill-opacity="0.20" d="M200 81h4v4h-4zM204 81h4v4h-4zM144 89h4v4h-4zM224 89h4v4h-4zM356 89h4v4h-4zM92 97h4v4h-4zM112 97h4v4h-4zM336 97h4v4h-4zM356 97h4v4h-4zM488 97h4v4h-4zM156 101h4v4h-4zM200 101h4v4h-4zM116 105h4v4h-4zM84 117h4v4h-4zM216 121h4v4h-4zM128 125h4v4h-4zM140 125h4v4h-4zM152 125h4v4h-4zM212 125h4v4h-4zM368 125h4v4h-4zM120 133h4v4h-4zM236 133h4v4h-4zM308 133h4v4h-4zM200 141h4v4h-4zM124 153h4v4h-4zM360 153h4v4h-4zM216 157h4v4h-4zM228 161h4v4h-4zM356 161h4v4h-4zM368 161h4v4h-4zM368 169h4v4h-4zM396 173h4v4h-4zM336 177h4v4h-4zM204 189h4v4h-4zM324 189h4v4h-4zM344 189h4v4h-4zM348 189h4v4h-4zM368 189h4v4h-4zM92 197h4v4h-4zM124 197h4v4h-4zM128 197h4v4h-4zM144 197h4v4h-4zM236 197h4v4h-4zM304 197h4v4h-4zM320 197h4v4h-4zM352 197h4v4h-4zM92 205h4v4h-4zM148 205h4v4h-4zM240 205h4v4h-4zM124 213h4v4h-4zM240 213h4v4h-4zM392 213h4v4h-4z"/><path fill="#646054" fill-opacity="0.30" d="M100 65h4v4h-4zM228 81h4v4h-4zM320 81h4v4h-4zM328 81h4v4h-4zM352 81h4v4h-4zM100 85h4v4h-4zM212 85h4v4h-4zM308 85h4v4h-4zM120 89h4v4h-4zM328 105h4v4h-4zM136 125h4v4h-4zM224 125h4v4h-4zM96 133h4v4h-4zM152 133h4v4h-4zM332 133h4v4h-4zM236 137h4v4h-4zM340 137h4v4h-4zM380 137h4v4h-4zM156 141h4v4h-4zM332 141h4v4h-4zM356 153h4v4h-4zM344 169h4v4h-4zM340 173h4v4h-4zM380 173h4v4h-4zM156 177h4v4h-4zM344 177h4v4h-4zM396 177h4v4h-4zM492 189h4v4h-4zM80 205h4v4h-4zM440 209h4v4h-4zM304 213h4v4h-4zM372 213h4v4h-4zM488 213h4v4h-4z"/><path fill="#646054" fill-opacity="0.40" d="M128 81h4v4h-4zM128 85h4v4h-4zM140 85h4v4h-4zM344 85h4v4h-4zM352 85h4v4h-4zM368 85h4v4h-4zM84 101h4v4h-4zM136 101h4v4h-4zM240 101h4v4h-4zM356 101h4v4h-4zM124 105h4v4h-4zM240 105h4v4h-4zM312 105h4v4h-4zM336 117h4v4h-4zM328 121h4v4h-4zM120 137h4v4h-4zM224 137h4v4h-4zM120 141h4v4h-4zM144 141h4v4h-4zM204 141h4v4h-4zM212 141h4v4h-4zM140 153h4v4h-4zM304 153h4v4h-4zM336 153h4v4h-4zM368 157h4v4h-4zM144 173h4v4h-4zM352 173h4v4h-4zM364 173h4v4h-4zM416 173h4v4h-4zM420 173h4v4h-4zM80 177h4v4h-4zM120 177h4v4h-4zM316 177h4v4h-4zM464 177h4v4h-4zM144 189h4v4h-4zM152 189h4v4h-4zM236 189h4v4h-4zM148 193h4v4h-4zM156 193h4v4h-4zM304 193h4v4h-4zM148 197h4v4h-4zM124 209h4v4h-4zM400 209h4v4h-4zM144 213h4v4h-4zM228 213h4v4h-4zM312 213h4v4h-4zM416 213h4v4h-4zM436 213h4v4h-4z"/><path fill="#646054" fill-opacity="0.50" d="M88 69h4v4h-4zM80 81h4v4h-4zM324 81h4v4h-4zM124 101h4v4h-4zM148 101h4v4h-4zM152 101h4v4h-4zM136 117h4v4h-4zM356 137h4v4h-4zM116 141h4v4h-4zM376 141h4v4h-4zM224 153h4v4h-4zM320 157h4v4h-4zM228 173h4v4h-4zM328 173h4v4h-4zM116 177h4v4h-4zM308 177h4v4h-4zM352 177h4v4h-4zM400 177h4v4h-4zM424 177h4v4h-4zM440 177h4v4h-4zM320 189h4v4h-4zM148 209h4v4h-4zM328 209h4v4h-4zM412 209h4v4h-4zM428 209h4v4h-4zM224 213h4v4h-4z"/><path fill="#646054" fill-opacity="0.60" d="M88 65h4v4h-4zM332 81h4v4h-4zM320 85h4v4h-4zM316 101h4v4h-4zM328 101h4v4h-4zM320 117h4v4h-4zM304 121h4v4h-4zM372 137h4v4h-4zM88 141h4v4h-4zM384 141h4v4h-4zM492 141h4v4h-4zM128 157h4v4h-4zM232 157h4v4h-4zM324 157h4v4h-4zM440 173h4v4h-4zM232 209h4v4h-4zM304 209h4v4h-4zM376 209h4v4h-4zM404 209h4v4h-4zM136 213h4v4h-4z"/><path fill="#646054" fill-opacity="0.70" d="M92 137h4v4h-4zM428 173h4v4h-4zM88 193h4v4h-4z"/><path fill="#50586c" fill-opacity="0.10" d="M156 81h4v4h-4zM364 81h4v4h-4zM200 85h4v4h-4zM88 89h4v4h-4zM308 89h4v4h-4zM488 89h4v4h-4zM144 97h4v4h-4zM220 97h4v4h-4zM224 97h4v4h-4zM240 97h4v4h-4zM324 97h4v4h-4zM492 97h4v4h-4zM100 117h4v4h-4zM216 117h4v4h-4zM344 117h4v4h-4zM100 125h4v4h-4zM228 125h4v4h-4zM352 125h4v4h-4zM324 133h4v4h-4zM368 133h4v4h-4zM372 133h4v4h-4zM396 141h4v4h-4zM132 161h4v4h-4zM116 169h4v4h-4zM156 169h4v4h-4zM200 169h4v4h-4zM220 169h4v4h-4zM324 169h4v4h-4zM328 169h4v4h-4zM420 169h4v4h-4zM452 169h4v4h-4zM464 169h4v4h-4zM476 169h4v4h-4zM404 173h4v4h-4zM412 173h4v4h-4zM484 173h4v4h-4zM336 181h4v4h-4zM312 189h4v4h-4zM116 197h4v4h-4zM224 197h4v4h-4zM240 197h4v4h-4zM244 197h4v4h-4zM344 197h4v4h-4zM376 205h4v4h-4zM412 205h4v4h-4zM428 205h4v4h-4zM324 213h4v4h-4zM448 213h4v4h-4z"/><path fill="#50586c" fill-opacity="0.20" d="M100 69h4v4h-4zM84 81h4v4h-4zM348 81h4v4h-4zM140 89h4v4h-4zM328 89h4v4h-4zM308 97h4v4h-4zM204 117h4v4h-4zM92 125h4v4h-4zM120 125h4v4h-4zM364 125h4v4h-4zM128 133h4v4h-4zM224 133h4v4h-4zM228 133h4v4h-4zM200 137h4v4h-4zM344 141h4v4h-4zM204 153h4v4h-4zM348 153h4v4h-4zM128 161h4v4h-4zM140 161h4v4h-4zM328 161h4v4h-4zM360 161h4v4h-4zM228 169h4v4h-4zM340 169h4v4h-4zM360 169h4v4h-4zM472 169h4v4h-4zM100 173h4v4h-4zM216 173h4v4h-4zM404 177h4v4h-4zM200 189h4v4h-4zM364 189h4v4h-4zM404 189h4v4h-4zM120 197h4v4h-4zM152 197h4v4h-4zM204 197h4v4h-4zM316 197h4v4h-4zM380 197h4v4h-4zM492 197h4v4h-4zM128 205h4v4h-4zM332 205h4v4h-4zM368 205h4v4h-4zM488 205h4v4h-4zM156 209h4v4h-4zM200 209h4v4h-4zM424 213h4v4h-4z"/><path fill="#50586c" fill-opacity="0.30" d="M80 61h4v4h-4zM204 85h4v4h-4zM96 97h4v4h-4zM136 97h4v4h-4zM304 97h4v4h-4zM328 97h4v4h-4zM220 101h4v4h-4zM344 101h4v4h-4zM376 105h4v4h-4zM232 117h4v4h-4zM492 117h4v4h-4zM204 121h4v4h-4zM304 125h4v4h-4zM312 133h4v4h-4zM344 133h4v4h-4zM312 137h4v4h-4zM152 141h4v4h-4zM316 141h4v4h-4zM336 141h4v4h-4zM424 169h4v4h-4zM452 173h4v4h-4zM464 173h4v4h-4zM392 177h4v4h-4zM488 177h4v4h-4zM356 189h4v4h-4zM236 193h4v4h-4zM136 197h4v4h-4zM204 209h4v4h-4zM432 209h4v4h-4zM444 209h4v4h-4zM376 213h4v4h-4z"/><path fill="#50586c" fill-opacity="0.40" d="M80 69h4v4h-4zM144 81h4v4h-4zM312 81h4v4h-4zM124 85h4v4h-4zM360 85h4v4h-4zM364 85h4v4h-4zM144 101h4v4h-4zM228 101h4v4h-4zM368 101h4v4h-4zM84 105h4v4h-4zM236 105h4v4h-4zM320 105h4v4h-4zM352 105h4v4h-4zM356 105h4v4h-4zM140 117h4v4h-4zM348 117h4v4h-4zM340 121h4v4h-4zM344 121h4v4h-4zM84 137h4v4h-4zM124 137h4v4h-4zM368 137h4v4h-4zM140 141h4v4h-4zM112 153h4v4h-4zM128 153h4v4h-4zM236 153h4v4h-4zM316 153h4v4h-4zM144 157h4v4h-4zM364 157h4v4h-4zM136 173h4v4h-4zM436 173h4v4h-4zM360 177h4v4h-4zM444 177h4v4h-4zM480 177h4v4h-4zM112 189h4v4h-4zM212 189h4v4h-4zM364 193h4v4h-4zM120 209h4v4h-4zM212 209h4v4h-4zM228 209h4v4h-4zM416 209h4v4h-4zM320 213h4v4h-4zM432 213h4v4h-4zM440 213h4v4h-4z"/><path fill="#50586c" fill-opacity="0.50" d="M92 81h4v4h-4zM336 101h4v4h-4zM92 105h4v4h-4zM212 117h4v4h-4zM304 117h4v4h-4zM316 121h4v4h-4zM488 121h4v4h-4zM228 137h4v4h-4zM316 137h4v4h-4zM376 137h4v4h-4zM492 137h4v4h-4zM152 173h4v4h-4zM460 173h4v4h-4zM480 173h4v4h-4zM312 177h4v4h-4zM448 177h4v4h-4zM80 193h4v4h-4zM316 193h4v4h-4zM380 193h4v4h-4zM140 209h4v4h-4zM116 213h4v4h-4zM212 213h4v4h-4zM384 213h4v4h-4zM412 213h4v4h-4z"/><path fill="#50586c" fill-opacity="0.60" d="M304 81h4v4h-4zM84 85h4v4h-4zM92 85h4v4h-4zM316 85h4v4h-4zM212 101h4v4h-4zM304 101h4v4h-4zM324 101h4v4h-4zM348 101h4v4h-4zM88 137h4v4h-4zM488 153h4v4h-4zM212 157h4v4h-4zM340 157h4v4h-4zM88 177h4v4h-4zM340 213h4v4h-4z"/><path fill="#50586c" fill-opacity="0.70" d="M492 85h4v4h-4zM96 121h4v4h-4zM312 157h4v4h-4zM492 157h4v4h-4zM332 173h4v4h-4zM116 193h4v4h-4zM92 209h4v4h-4zM332 209h4v4h-4z"/><path fill="#645856" fill-opacity="0.10" d="M344 81h4v4h-4zM212 89h4v4h-4zM228 89h4v4h-4zM304 89h4v4h-4zM336 89h4v4h-4zM140 97h4v4h-4zM360 97h4v4h-4zM368 97h4v4h-4zM156 117h4v4h-4zM84 125h4v4h-4zM116 125h4v4h-4zM132 125h4v4h-4zM360 125h4v4h-4zM100 133h4v4h-4zM116 133h4v4h-4zM156 133h4v4h-4zM200 133h4v4h-4zM336 133h4v4h-4zM132 141h4v4h-4zM156 153h4v4h-4zM312 161h4v4h-4zM316 161h4v4h-4zM324 161h4v4h-4zM100 169h4v4h-4zM144 169h4v4h-4zM304 169h4v4h-4zM364 169h4v4h-4zM132 177h4v4h-4zM452 181h4v4h-4zM84 197h4v4h-4zM132 197h4v4h-4zM84 205h4v4h-4zM124 205h4v4h-4zM204 205h4v4h-4zM312 205h4v4h-4zM340 205h4v4h-4zM348 205h4v4h-4zM324 209h4v4h-4zM216 213h4v4h-4z"/><path fill="#645856" fill-opacity="0.20" d="M92 61h4v4h-4zM80 89h4v4h-4zM92 89h4v4h-4zM96 89h4v4h-4zM204 89h4v4h-4zM352 89h4v4h-4zM360 89h4v4h-4zM368 89h4v4h-4zM88 97h4v4h-4zM228 97h4v4h-4zM376 101h4v4h-4zM200 105h4v4h-4zM340 117h4v4h-4zM360 121h4v4h-4zM96 125h4v4h-4zM144 125h4v4h-4zM492 125h4v4h-4zM88 133h4v4h-4zM92 133h4v4h-4zM156 137h4v4h-4zM100 141h4v4h-4zM124 141h4v4h-4zM200 153h4v4h-4zM352 153h4v4h-4zM352 161h4v4h-4zM92 169h4v4h-4zM120 169h4v4h-4zM224 169h4v4h-4zM316 169h4v4h-4zM436 169h4v4h-4zM488 169h4v4h-4zM200 173h4v4h-4zM100 177h4v4h-4zM124 177h4v4h-4zM200 177h4v4h-4zM340 177h4v4h-4zM100 189h4v4h-4zM336 189h4v4h-4zM396 189h4v4h-4zM80 197h4v4h-4zM140 197h4v4h-4zM328 197h4v4h-4zM372 197h4v4h-4zM396 197h4v4h-4zM96 205h4v4h-4zM112 205h4v4h-4zM232 205h4v4h-4zM392 205h4v4h-4z"/><path fill="#645856" fill-opacity="0.30" d="M124 81h4v4h-4zM316 81h4v4h-4zM336 81h4v4h-4zM340 97h4v4h-4zM96 101h4v4h-4zM116 101h4v4h-4zM204 101h4v4h-4zM360 101h4v4h-4zM364 101h4v4h-4zM96 105h4v4h-4zM332 105h4v4h-4zM364 105h4v4h-4zM488 105h4v4h-4zM356 117h4v4h-4zM212 133h4v4h-4zM324 141h4v4h-4zM344 161h4v4h-4zM352 169h4v4h-4zM204 173h4v4h-4zM212 173h4v4h-4zM304 173h4v4h-4zM348 177h4v4h-4zM240 189h4v4h-4zM112 193h4v4h-4zM340 193h4v4h-4zM376 193h4v4h-4zM96 197h4v4h-4zM228 197h4v4h-4zM392 197h4v4h-4zM220 205h4v4h-4zM236 209h4v4h-4zM236 213h4v4h-4zM308 213h4v4h-4zM336 213h4v4h-4zM352 213h4v4h-4z"/><path fill="#645856" fill-opacity="0.40" d="M148 81h4v4h-4zM212 81h4v4h-4zM136 85h4v4h-4zM144 85h4v4h-4zM152 85h4v4h-4zM156 85h4v4h-4zM120 101h4v4h-4zM380 105h4v4h-4zM96 117h4v4h-4zM148 117h4v4h-4zM224 117h4v4h-4zM228 117h4v4h-4zM140 121h4v4h-4zM156 121h4v4h-4zM336 137h4v4h-4zM360 137h4v4h-4zM128 141h4v4h-4zM372 141h4v4h-4zM96 153h4v4h-4zM344 153h4v4h-4zM120 157h4v4h-4zM136 157h4v4h-4zM140 157h4v4h-4zM96 173h4v4h-4zM124 173h4v4h-4zM312 173h4v4h-4zM388 173h4v4h-4zM468 173h4v4h-4zM112 177h4v4h-4zM128 177h4v4h-4zM140 177h4v4h-4zM332 177h4v4h-4zM96 189h4v4h-4zM128 189h4v4h-4zM140 189h4v4h-4zM148 189h4v4h-4zM304 189h4v4h-4zM400 189h4v4h-4zM224 193h4v4h-4zM388 193h4v4h-4zM84 209h4v4h-4zM136 209h4v4h-4zM240 209h4v4h-4zM388 209h4v4h-4zM396 209h4v4h-4zM80 213h4v4h-4zM396 213h4v4h-4zM400 213h4v4h-4z"/><path fill="#645856" fill-opacity="0.50" d="M80 65h4v4h-4zM96 69h4v4h-4zM216 81h4v4h-4zM336 85h4v4h-4zM488 85h4v4h-4zM148 105h4v4h-4zM212 105h4v4h-4zM224 105h4v4h-4zM324 117h4v4h-4zM324 121h4v4h-4zM140 137h4v4h-4zM220 137h4v4h-4zM392 141h4v4h-4zM92 153h4v4h-4zM312 153h4v4h-4zM220 173h4v4h-4zM308 173h4v4h-4zM376 173h4v4h-4zM304 177h4v4h-4zM324 177h4v4h-4zM380 177h4v4h-4zM80 189h4v4h-4zM136 189h4v4h-4zM328 193h4v4h-4zM372 193h4v4h-4zM96 213h4v4h-4zM148 213h4v4h-4zM232 213h4v4h-4zM364 213h4v4h-4zM388 213h4v4h-4z"/><path fill="#645856" fill-opacity="0.60" d="M340 85h4v4h-4zM324 105h4v4h-4zM488 117h4v4h-4zM92 121h4v4h-4zM128 121h4v4h-4zM212 121h4v4h-4zM308 121h4v4h-4zM348 137h4v4h-4zM92 157h4v4h-4zM424 173h4v4h-4zM136 177h4v4h-4zM212 193h4v4h-4zM396 193h4v4h-4zM88 209h4v4h-4zM128 209h4v4h-4zM364 209h4v4h-4zM372 209h4v4h-4z"/><path fill="#645856" fill-opacity="0.70" d="M116 121h4v4h-4zM320 121h4v4h-4zM492 121h4v4h-4zM488 137h4v4h-4zM348 193h4v4h-4zM400 193h4v4h-4zM224 209h4v4h-4z"/><path fill="#585c5c" fill-opacity="0.10" d="M88 61h4v4h-4zM356 81h4v4h-4zM324 89h4v4h-4zM340 89h4v4h-4zM100 97h4v4h-4zM116 97h4v4h-4zM124 97h4v4h-4zM156 97h4v4h-4zM216 97h4v4h-4zM352 97h4v4h-4zM368 117h4v4h-4zM156 125h4v4h-4zM216 125h4v4h-4zM316 125h4v4h-4zM320 125h4v4h-4zM332 125h4v4h-4zM340 125h4v4h-4zM376 133h4v4h-4zM392 133h4v4h-4zM388 137h4v4h-4zM240 141h4v4h-4zM216 153h4v4h-4zM100 161h4v4h-4zM116 161h4v4h-4zM304 161h4v4h-4zM336 161h4v4h-4zM84 169h4v4h-4zM140 169h4v4h-4zM212 169h4v4h-4zM232 169h4v4h-4zM372 169h4v4h-4zM376 169h4v4h-4zM380 169h4v4h-4zM448 169h4v4h-4zM492 169h4v4h-4zM484 177h4v4h-4zM100 197h4v4h-4zM360 197h4v4h-4zM376 197h4v4h-4zM384 197h4v4h-4zM140 205h4v4h-4zM384 205h4v4h-4zM132 213h4v4h-4zM420 217h4v4h-4z"/><path fill="#585c5c" fill-opacity="0.20" d="M368 81h4v4h-4zM116 89h4v4h-4zM128 89h4v4h-4zM152 89h4v4h-4zM216 89h4v4h-4zM348 89h4v4h-4zM492 89h4v4h-4zM212 97h4v4h-4zM364 117h4v4h-4zM124 121h4v4h-4zM80 125h4v4h-4zM112 125h4v4h-4zM124 125h4v4h-4zM200 125h4v4h-4zM204 125h4v4h-4zM308 125h4v4h-4zM112 133h4v4h-4zM340 141h4v4h-4zM388 141h4v4h-4zM124 161h4v4h-4zM144 161h4v4h-4zM308 161h4v4h-4zM96 169h4v4h-4zM348 169h4v4h-4zM416 169h4v4h-4zM156 173h4v4h-4zM384 173h4v4h-4zM408 173h4v4h-4zM84 189h4v4h-4zM372 189h4v4h-4zM124 193h4v4h-4zM200 197h4v4h-4zM220 197h4v4h-4zM324 197h4v4h-4zM356 197h4v4h-4zM88 205h4v4h-4zM120 205h4v4h-4zM212 205h4v4h-4zM224 205h4v4h-4zM244 205h4v4h-4zM400 205h4v4h-4zM424 209h4v4h-4zM328 213h4v4h-4z"/><path fill="#585c5c" fill-opacity="0.30" d="M120 85h4v4h-4zM112 89h4v4h-4zM136 89h4v4h-4zM156 105h4v4h-4zM220 105h4v4h-4zM112 121h4v4h-4zM224 121h4v4h-4zM220 125h4v4h-4zM356 125h4v4h-4zM136 133h4v4h-4zM340 133h4v4h-4zM204 137h4v4h-4zM324 137h4v4h-4zM312 141h4v4h-4zM488 141h4v4h-4zM112 157h4v4h-4zM220 157h4v4h-4zM224 161h4v4h-4zM308 169h4v4h-4zM332 169h4v4h-4zM480 169h4v4h-4zM392 173h4v4h-4zM244 189h4v4h-4zM328 189h4v4h-4zM340 189h4v4h-4zM232 197h4v4h-4zM400 197h4v4h-4zM152 205h4v4h-4zM320 205h4v4h-4zM372 205h4v4h-4zM388 205h4v4h-4zM392 209h4v4h-4zM436 209h4v4h-4zM152 213h4v4h-4zM156 213h4v4h-4zM344 213h4v4h-4z"/><path fill="#585c5c" fill-opacity="0.40" d="M92 69h4v4h-4zM120 81h4v4h-4zM140 81h4v4h-4zM308 81h4v4h-4zM148 85h4v4h-4zM312 85h4v4h-4zM148 89h4v4h-4zM312 89h4v4h-4zM344 97h4v4h-4zM308 101h4v4h-4zM372 101h4v4h-4zM140 105h4v4h-4zM348 105h4v4h-4zM368 105h4v4h-4zM144 117h4v4h-4zM308 117h4v4h-4zM120 121h4v4h-4zM232 121h4v4h-4zM112 137h4v4h-4zM136 137h4v4h-4zM328 137h4v4h-4zM80 141h4v4h-4zM96 141h4v4h-4zM112 141h4v4h-4zM320 141h4v4h-4zM356 141h4v4h-4zM364 141h4v4h-4zM152 157h4v4h-4zM156 157h4v4h-4zM348 157h4v4h-4zM352 157h4v4h-4zM356 157h4v4h-4zM112 173h4v4h-4zM120 173h4v4h-4zM96 177h4v4h-4zM144 177h4v4h-4zM212 177h4v4h-4zM364 177h4v4h-4zM372 177h4v4h-4zM388 177h4v4h-4zM416 177h4v4h-4zM460 177h4v4h-4zM468 177h4v4h-4zM120 189h4v4h-4zM136 193h4v4h-4zM140 193h4v4h-4zM152 193h4v4h-4zM244 193h4v4h-4zM360 205h4v4h-4zM84 213h4v4h-4zM112 213h4v4h-4zM244 213h4v4h-4z"/><path fill="#585c5c" fill-opacity="0.50" d="M96 65h4v4h-4zM136 81h4v4h-4zM80 85h4v4h-4zM80 101h4v4h-4zM308 105h4v4h-4zM316 105h4v4h-4zM336 105h4v4h-4zM80 121h4v4h-4zM332 121h4v4h-4zM80 137h4v4h-4zM96 137h4v4h-4zM148 137h4v4h-4zM148 141h4v4h-4zM228 141h4v4h-4zM304 141h4v4h-4zM88 153h4v4h-4zM232 153h4v4h-4zM340 153h4v4h-4zM488 157h4v4h-4zM140 173h4v4h-4zM400 173h4v4h-4zM492 173h4v4h-4zM92 177h4v4h-4zM224 177h4v4h-4zM320 177h4v4h-4zM436 177h4v4h-4zM88 189h4v4h-4zM488 193h4v4h-4zM96 209h4v4h-4zM152 209h4v4h-4zM92 213h4v4h-4zM332 213h4v4h-4z"/><path fill="#585c5c" fill-opacity="0.60" d="M324 85h4v4h-4zM328 85h4v4h-4zM88 101h4v4h-4zM112 105h4v4h-4zM128 137h4v4h-4zM304 137h4v4h-4zM332 137h4v4h-4zM136 141h4v4h-4zM332 157h4v4h-4zM128 173h4v4h-4zM224 173h4v4h-4zM368 173h4v4h-4zM444 173h4v4h-4zM428 177h4v4h-4zM492 177h4v4h-4zM84 193h4v4h-4zM92 193h4v4h-4zM128 193h4v4h-4zM312 193h4v4h-4zM352 209h4v4h-4zM492 213h4v4h-4z"/><path fill="#585c5c" fill-opacity="0.70" d="M92 65h4v4h-4zM88 85h4v4h-4zM220 85h4v4h-4zM224 85h4v4h-4zM92 101h4v4h-4zM332 101h4v4h-4zM88 121h4v4h-4zM96 157h4v4h-4zM116 157h4v4h-4zM328 157h4v4h-4zM320 173h4v4h-4zM372 173h4v4h-4zM320 193h4v4h-4zM492 193h4v4h-4zM488 209h4v4h-4z"/><path fill="#585c5c" fill-opacity="0.80" d="M332 85h4v4h-4zM320 137h4v4h-4z"/><path fill="#ffffff" fill-opacity="0.10" d="M124 61h4v4h-4zM156 61h4v4h-4zM200 61h4v4h-4zM204 61h4v4h-4zM224 61h4v4h-4zM228 61h4v4h-4zM232 61h4v4h-4zM356 61h4v4h-4zM328 65h4v4h-4zM348 65h4v4h-4zM356 65h4v4h-4zM364 65h4v4h-4zM348 69h4v4h-4zM304 73h4v4h-4z"/><path fill="#ffffff" fill-opacity="0.20" d="M128 61h4v4h-4zM136 61h4v4h-4zM152 61h4v4h-4zM236 61h4v4h-4zM240 61h4v4h-4zM116 65h4v4h-4zM216 65h4v4h-4zM156 69h4v4h-4zM212 69h4v4h-4zM312 69h4v4h-4z"/><path fill="#ffffff" fill-opacity="0.30" d="M120 65h4v4h-4zM124 65h4v4h-4zM148 65h4v4h-4zM332 65h4v4h-4zM344 65h4v4h-4zM120 69h4v4h-4zM124 69h4v4h-4zM128 69h4v4h-4zM204 69h4v4h-4zM228 69h4v4h-4zM232 69h4v4h-4zM332 69h4v4h-4z"/><path fill="#ffffff" fill-opacity="0.40" d="M152 65h4v4h-4zM240 65h4v4h-4zM308 65h4v4h-4zM492 65h4v4h-4zM112 69h4v4h-4zM136 69h4v4h-4zM316 69h4v4h-4zM360 69h4v4h-4zM368 69h4v4h-4zM492 69h4v4h-4z"/><path fill="#ebf5ff" fill-opacity="0.10" d="M120 61h4v4h-4zM148 61h4v4h-4zM324 61h4v4h-4zM328 61h4v4h-4zM492 61h4v4h-4zM200 65h4v4h-4zM372 65h4v4h-4zM132 69h4v4h-4zM372 69h4v4h-4z"/><path fill="#ebf5ff" fill-opacity="0.20" d="M112 61h4v4h-4zM156 65h4v4h-4zM116 69h4v4h-4zM200 69h4v4h-4zM356 69h4v4h-4zM488 69h4v4h-4z"/><path fill="#ebf5ff" fill-opacity="0.30" d="M128 65h4v4h-4zM136 65h4v4h-4zM144 65h4v4h-4zM224 65h4v4h-4zM340 65h4v4h-4zM140 69h4v4h-4zM152 69h4v4h-4zM220 69h4v4h-4zM224 69h4v4h-4zM336 69h4v4h-4zM340 69h4v4h-4z"/><path fill="#ebf5ff" fill-opacity="0.40" d="M212 65h4v4h-4zM232 65h4v4h-4zM324 65h4v4h-4zM360 65h4v4h-4zM308 69h4v4h-4z"/><path fill="#ebf5ff" fill-opacity="0.50" d="M312 65h4v4h-4zM352 65h4v4h-4zM304 69h4v4h-4z"/><path fill="#dceeff" fill-opacity="0.10" d="M116 61h4v4h-4zM140 61h4v4h-4zM144 61h4v4h-4zM216 61h4v4h-4zM336 61h4v4h-4zM344 61h4v4h-4zM352 61h4v4h-4zM488 61h4v4h-4zM328 69h4v4h-4z"/><path fill="#dceeff" fill-opacity="0.20" d="M212 61h4v4h-4zM220 61h4v4h-4zM112 65h4v4h-4zM204 65h4v4h-4zM320 69h4v4h-4zM364 69h4v4h-4z"/><path fill="#dceeff" fill-opacity="0.30" d="M228 65h4v4h-4zM320 65h4v4h-4zM336 65h4v4h-4zM144 69h4v4h-4zM240 69h4v4h-4zM344 69h4v4h-4z"/><path fill="#dceeff" fill-opacity="0.40" d="M140 65h4v4h-4zM220 65h4v4h-4zM304 65h4v4h-4zM368 65h4v4h-4zM148 69h4v4h-4zM236 69h4v4h-4zM324 69h4v4h-4zM352 69h4v4h-4z"/><path fill="#dceeff" fill-opacity="0.50" d="M236 65h4v4h-4zM316 65h4v4h-4zM488 65h4v4h-4z"/><path fill="#50505c" fill-opacity="0.20" d="M669 115h4v4h-4z"/><path fill="#50505c" fill-opacity="0.40" d="M633 123h4v4h-4zM681 123h4v4h-4z"/><path fill="#50505c" fill-opacity="0.50" d="M613 119h4v4h-4zM633 119h4v4h-4zM637 119h4v4h-4z"/><path fill="#50505c" fill-opacity="0.60" d="M629 119h4v4h-4zM705 119h4v4h-4z"/><path fill="#50505c" fill-opacity="0.70" d="M621 119h4v4h-4z"/><path fill="#50505c" fill-opacity="0.80" d="M689 119h4v4h-4z"/><path fill="#5f585f" fill-opacity="0.10" d="M673 115h4v4h-4z"/><path fill="#5f585f" fill-opacity="0.20" d="M689 115h4v4h-4zM629 123h4v4h-4zM649 123h4v4h-4zM653 123h4v4h-4z"/><path fill="#5f585f" fill-opacity="0.40" d="M685 123h4v4h-4zM689 123h4v4h-4z"/><path fill="#5f585f" fill-opacity="0.50" d="M637 123h4v4h-4z"/><path fill="#5f585f" fill-opacity="0.60" d="M617 119h4v4h-4zM661 119h4v4h-4zM677 119h4v4h-4z"/><path fill="#5f585f" fill-opacity="0.70" d="M685 119h4v4h-4z"/><path fill="#646054" fill-opacity="0.10" d="M653 115h4v4h-4z"/><path fill="#646054" fill-opacity="0.20" d="M673 119h4v4h-4z"/><path fill="#646054" fill-opacity="0.30" d="M645 119h4v4h-4zM617 123h4v4h-4z"/><path fill="#646054" fill-opacity="0.40" d="M613 115h4v4h-4zM641 119h4v4h-4zM625 123h4v4h-4zM661 123h4v4h-4zM697 123h4v4h-4z"/><path fill="#646054" fill-opacity="0.50" d="M609 119h4v4h-4zM693 119h4v4h-4zM673 123h4v4h-4z"/><path fill="#646054" fill-opacity="0.60" d="M625 119h4v4h-4zM657 119h4v4h-4z"/><path fill="#50586c" fill-opacity="0.10" d="M681 115h4v4h-4z"/><path fill="#50586c" fill-opacity="0.20" d="M685 115h4v4h-4zM609 123h4v4h-4zM641 123h4v4h-4zM701 123h4v4h-4z"/><path fill="#50586c" fill-opacity="0.30" d="M609 115h4v4h-4zM665 123h4v4h-4zM669 123h4v4h-4z"/><path fill="#50586c" fill-opacity="0.40" d="M657 123h4v4h-4z"/><path fill="#50586c" fill-opacity="0.60" d="M701 119h4v4h-4z"/><path fill="#50586c" fill-opacity="0.70" d="M709 119h4v4h-4z"/><path fill="#645856" fill-opacity="0.10" d="M693 115h4v4h-4z"/><path fill="#645856" fill-opacity="0.20" d="M645 123h4v4h-4z"/><path fill="#645856" fill-opacity="0.40" d="M709 123h4v4h-4z"/><path fill="#645856" fill-opacity="0.50" d="M653 119h4v4h-4zM681 119h4v4h-4z"/><path fill="#645856" fill-opacity="0.60" d="M649 119h4v4h-4z"/><path fill="#585c5c" fill-opacity="0.10" d="M677 115h4v4h-4z"/><path fill="#585c5c" fill-opacity="0.20" d="M625 115h4v4h-4z"/><path fill="#585c5c" fill-opacity="0.30" d="M621 123h4v4h-4z"/><path fill="#585c5c" fill-opacity="0.40" d="M665 119h4v4h-4zM669 119h4v4h-4zM677 123h4v4h-4zM705 123h4v4h-4z"/><path fill="#585c5c" fill-opacity="0.50" d="M693 123h4v4h-4z"/><path fill="#585c5c" fill-opacity="0.70" d="M697 119h4v4h-4z"/><path fill="#2878c8" fill-opacity="0.10" d="M787 142h4v4h-4z"/><path fill="#2878c8" fill-opacity="0.40" d="M783 142h4v4h-4zM751 146h4v4h-4zM775 146h4v4h-4z"/><path fill="#3c87cd" fill-opacity="0.20" d="M715 146h4v4h-4z"/><path fill="#3c87cd" fill-opacity="0.30" d="M727 138h4v4h-4z"/><path fill="#3c87cd" fill-opacity="0.40" d="M751 142h4v4h-4zM775 142h4v4h-4z"/><path fill="#3c87cd" fill-opacity="0.50" d="M715 142h4v4h-4z"/><path fill="#3c87cd" fill-opacity="0.60" d="M719 142h4v4h-4z"/><path fill="#326ebe" fill-opacity="0.10" d="M743 138h4v4h-4zM751 138h4v4h-4zM759 138h4v4h-4zM771 138h4v4h-4zM763 146h4v4h-4z"/><path fill="#326ebe" fill-opacity="0.20" d="M723 138h4v4h-4zM723 142h4v4h-4zM739 142h4v4h-4zM731 146h4v4h-4zM747 146h4v4h-4z"/><path fill="#326ebe" fill-opacity="0.30" d="M715 138h4v4h-4zM727 142h4v4h-4z"/><path fill="#326ebe" fill-opacity="0.40" d="M735 146h4v4h-4zM743 146h4v4h-4z"/><path fill="#326ebe" fill-opacity="0.60" d="M759 142h4v4h-4z"/><path fill="#5596c8" fill-opacity="0.10" d="M735 138h4v4h-4zM755 138h4v4h-4zM763 142h4v4h-4zM779 142h4v4h-4zM787 146h4v4h-4z"/><path fill="#5596c8" fill-opacity="0.20" d="M755 142h4v4h-4zM723 146h4v4h-4z"/><path fill="#5596c8" fill-opacity="0.30" d="M731 138h4v4h-4zM739 138h4v4h-4zM771 142h4v4h-4zM755 146h4v4h-4z"/><path fill="#5596c8" fill-opacity="0.40" d="M783 146h4v4h-4z"/><path fill="#5596c8" fill-opacity="0.50" d="M743 142h4v4h-4z"/><path fill="#467dd7" fill-opacity="0.10" d="M779 146h4v4h-4z"/><path fill="#467dd7" fill-opacity="0.20" d="M719 138h4v4h-4zM727 146h4v4h-4z"/><path fill="#467dd7" fill-opacity="0.30" d="M719 146h4v4h-4zM771 146h4v4h-4z"/><path fill="#467dd7" fill-opacity="0.40" d="M767 142h4v4h-4zM739 146h4v4h-4zM767 146h4v4h-4z"/><path fill="#467dd7" fill-opacity="0.50" d="M731 142h4v4h-4zM759 146h4v4h-4z"/><path fill="#467dd7" fill-opacity="0.60" d="M735 142h4v4h-4z"/><path fill="#50505c" fill-opacity="0.10" d="M693 281h4v4h-4zM333 285h4v4h-4zM705 285h4v4h-4zM705 301h4v4h-4zM333 305h4v4h-4zM597 305h4v4h-4zM69 309h4v4h-4zM489 309h4v4h-4zM589 309h4v4h-4zM785 309h4v4h-4zM61 317h4v4h-4zM77 317h4v4h-4zM441 317h4v4h-4zM449 317h4v4h-4zM693 321h4v4h-4zM617 329h4v4h-4zM653 345h4v4h-4zM697 345h4v4h-4zM425 353h4v4h-4zM449 353h4v4h-4zM641 353h4v4h-4zM653 353h4v4h-4zM433 365h4v4h-4zM693 365h4v4h-4z"/><path fill="#50505c" fill-opacity="0.20" d="M613 281h4v4h-4zM633 281h4v4h-4zM321 285h4v4h-4zM597 289h4v4h-4zM769 301h4v4h-4zM329 309h4v4h-4zM613 309h4v4h-4zM761 309h4v4h-4zM765 309h4v4h-4zM421 317h4v4h-4zM629 317h4v4h-4zM417 321h4v4h-4zM605 325h4v4h-4zM705 341h4v4h-4zM57 345h4v4h-4zM485 345h4v4h-4zM605 345h4v4h-4zM629 345h4v4h-4zM645 345h4v4h-4zM61 353h4v4h-4zM445 353h4v4h-4z"/><path fill="#50505c" fill-opacity="0.30" d="M621 281h4v4h-4zM637 285h4v4h-4zM777 285h4v4h-4zM649 289h4v4h-4zM693 289h4v4h-4zM773 289h4v4h-4zM61 301h4v4h-4zM653 305h4v4h-4zM57 309h4v4h-4zM445 309h4v4h-4zM445 321h4v4h-4zM69 325h4v4h-4zM77 325h4v4h-4zM693 325h4v4h-4zM701 325h4v4h-4zM781 325h4v4h-4zM73 337h4v4h-4zM441 337h4v4h-4zM449 337h4v4h-4zM777 337h4v4h-4zM489 341h4v4h-4zM633 341h4v4h-4zM417 345h4v4h-4zM601 357h4v4h-4zM701 357h4v4h-4zM785 361h4v4h-4z"/><path fill="#50505c" fill-opacity="0.40" d="M689 285h4v4h-4zM737 285h4v4h-4zM625 289h4v4h-4zM777 289h4v4h-4zM57 301h4v4h-4zM73 301h4v4h-4zM425 301h4v4h-4zM681 305h4v4h-4zM697 305h4v4h-4zM77 321h4v4h-4zM425 321h4v4h-4zM637 321h4v4h-4zM777 321h4v4h-4zM637 325h4v4h-4zM785 337h4v4h-4zM641 341h4v4h-4zM637 345h4v4h-4zM769 345h4v4h-4zM637 357h4v4h-4zM641 357h4v4h-4zM73 361h4v4h-4zM605 361h4v4h-4zM625 361h4v4h-4zM629 361h4v4h-4zM741 361h4v4h-4z"/><path fill="#50505c" fill-opacity="0.50" d="M621 285h4v4h-4zM745 285h4v4h-4zM749 285h4v4h-4zM329 289h4v4h-4zM605 289h4v4h-4zM621 289h4v4h-4zM689 289h4v4h-4zM749 289h4v4h-4zM429 301h4v4h-4zM701 301h4v4h-4zM653 321h4v4h-4zM773 321h4v4h-4zM425 337h4v4h-4zM609 337h4v4h-4zM753 337h4v4h-4zM689 341h4v4h-4zM441 357h4v4h-4zM737 357h4v4h-4zM417 361h4v4h-4zM425 361h4v4h-4zM609 361h4v4h-4z"/><path fill="#50505c" fill-opacity="0.60" d="M753 305h4v4h-4zM629 341h4v4h-4zM781 341h4v4h-4zM609 357h4v4h-4z"/><path fill="#50505c" fill-opacity="0.70" d="M429 285h4v4h-4zM649 305h4v4h-4zM765 305h4v4h-4z"/><path fill="#50505c" fill-opacity="0.80" d="M745 341h4v4h-4z"/><path fill="#5f585f" fill-opacity="0.10" d="M77 281h4v4h-4zM489 281h4v4h-4zM449 285h4v4h-4zM689 293h4v4h-4zM77 301h4v4h-4zM741 301h4v4h-4zM757 305h4v4h-4zM597 309h4v4h-4zM645 309h4v4h-4zM653 309h4v4h-4zM57 317h4v4h-4zM633 317h4v4h-4zM765 317h4v4h-4zM421 325h4v4h-4zM433 337h4v4h-4zM765 345h4v4h-4zM77 353h4v4h-4zM329 353h4v4h-4zM489 353h4v4h-4zM605 353h4v4h-4zM685 357h4v4h-4zM617 365h4v4h-4zM749 365h4v4h-4z"/><path fill="#5f585f" fill-opacity="0.20" d="M57 281h4v4h-4zM329 281h4v4h-4zM605 281h4v4h-4zM77 289h4v4h-4zM489 289h4v4h-4zM653 289h4v4h-4zM741 289h4v4h-4zM489 301h4v4h-4zM777 301h4v4h-4zM321 305h4v4h-4zM61 309h4v4h-4zM77 309h4v4h-4zM485 309h4v4h-4zM601 309h4v4h-4zM617 309h4v4h-4zM641 309h4v4h-4zM749 309h4v4h-4zM605 317h4v4h-4zM773 317h4v4h-4zM705 321h4v4h-4zM489 337h4v4h-4zM765 337h4v4h-4zM685 341h4v4h-4zM765 341h4v4h-4zM61 345h4v4h-4zM737 345h4v4h-4zM753 345h4v4h-4zM773 345h4v4h-4zM65 353h4v4h-4zM417 353h4v4h-4zM629 353h4v4h-4zM689 353h4v4h-4zM781 353h4v4h-4zM785 353h4v4h-4z"/><path fill="#5f585f" fill-opacity="0.30" d="M445 281h4v4h-4zM609 289h4v4h-4zM653 301h4v4h-4zM773 301h4v4h-4zM69 317h4v4h-4zM449 325h4v4h-4zM705 325h4v4h-4zM625 337h4v4h-4zM681 345h4v4h-4zM65 357h4v4h-4zM433 357h4v4h-4zM485 361h4v4h-4zM649 361h4v4h-4zM689 361h4v4h-4zM693 361h4v4h-4z"/><path fill="#5f585f" fill-opacity="0.40" d="M61 285h4v4h-4zM77 285h4v4h-4zM441 289h4v4h-4zM641 289h4v4h-4zM645 289h4v4h-4zM685 289h4v4h-4zM65 301h4v4h-4zM609 301h4v4h-4zM645 301h4v4h-4zM697 301h4v4h-4zM745 301h4v4h-4zM753 301h4v4h-4zM57 305h4v4h-4zM61 321h4v4h-4zM433 321h4v4h-4zM73 325h4v4h-4zM429 325h4v4h-4zM441 325h4v4h-4zM601 325h4v4h-4zM329 337h4v4h-4zM733 337h4v4h-4zM741 337h4v4h-4zM773 337h4v4h-4zM681 341h4v4h-4zM741 341h4v4h-4zM761 341h4v4h-4zM77 357h4v4h-4zM761 357h4v4h-4zM445 361h4v4h-4z"/><path fill="#5f585f" fill-opacity="0.50" d="M609 285h4v4h-4zM445 289h4v4h-4zM761 289h4v4h-4zM613 305h4v4h-4zM785 305h4v4h-4zM441 321h4v4h-4zM701 321h4v4h-4zM753 325h4v4h-4zM769 325h4v4h-4zM649 337h4v4h-4zM781 337h4v4h-4zM61 341h4v4h-4zM605 341h4v4h-4zM769 341h4v4h-4zM69 357h4v4h-4zM417 357h4v4h-4zM681 357h4v4h-4zM757 357h4v4h-4zM329 361h4v4h-4zM681 361h4v4h-4z"/><path fill="#5f585f" fill-opacity="0.60" d="M437 285h4v4h-4zM421 289h4v4h-4zM441 305h4v4h-4zM785 321h4v4h-4zM417 325h4v4h-4zM745 361h4v4h-4z"/><path fill="#646054" fill-opacity="0.10" d="M69 281h4v4h-4zM645 281h4v4h-4zM697 281h4v4h-4zM777 281h4v4h-4zM333 289h4v4h-4zM449 289h4v4h-4zM589 289h4v4h-4zM321 293h4v4h-4zM433 293h4v4h-4zM617 293h4v4h-4zM321 301h4v4h-4zM449 301h4v4h-4zM449 305h4v4h-4zM617 305h4v4h-4zM421 309h4v4h-4zM489 317h4v4h-4zM625 317h4v4h-4zM645 317h4v4h-4zM689 317h4v4h-4zM689 329h4v4h-4zM693 329h4v4h-4zM749 329h4v4h-4zM757 345h4v4h-4zM785 345h4v4h-4zM613 353h4v4h-4zM625 353h4v4h-4zM757 353h4v4h-4zM749 357h4v4h-4zM333 361h4v4h-4z"/><path fill="#646054" fill-opacity="0.20" d="M593 281h4v4h-4zM625 281h4v4h-4zM781 281h4v4h-4zM421 305h4v4h-4zM73 309h4v4h-4zM321 309h4v4h-4zM425 309h4v4h-4zM753 309h4v4h-4zM601 317h4v4h-4zM613 317h4v4h-4zM681 317h4v4h-4zM733 317h4v4h-4zM749 321h4v4h-4zM437 325h4v4h-4zM765 325h4v4h-4zM693 345h4v4h-4zM749 345h4v4h-4zM733 353h4v4h-4zM765 361h4v4h-4z"/><path fill="#646054" fill-opacity="0.30" d="M429 281h4v4h-4zM625 285h4v4h-4zM653 285h4v4h-4zM769 285h4v4h-4zM433 289h4v4h-4zM785 289h4v4h-4zM421 301h4v4h-4zM485 301h4v4h-4zM629 301h4v4h-4zM73 305h4v4h-4zM637 305h4v4h-4zM737 309h4v4h-4zM425 317h4v4h-4zM701 317h4v4h-4zM489 321h4v4h-4zM425 325h4v4h-4zM485 325h4v4h-4zM617 325h4v4h-4zM785 325h4v4h-4zM417 337h4v4h-4zM601 337h4v4h-4zM629 337h4v4h-4zM733 341h4v4h-4zM433 345h4v4h-4zM745 353h4v4h-4zM421 361h4v4h-4zM701 361h4v4h-4z"/><path fill="#646054" fill-opacity="0.40" d="M629 285h4v4h-4zM613 289h4v4h-4zM697 289h4v4h-4zM317 301h4v4h-4zM437 301h4v4h-4zM681 301h4v4h-4zM785 301h4v4h-4zM593 305h4v4h-4zM429 309h4v4h-4zM637 317h4v4h-4zM769 317h4v4h-4zM69 321h4v4h-4zM73 321h4v4h-4zM329 321h4v4h-4zM645 321h4v4h-4zM737 321h4v4h-4zM761 321h4v4h-4zM61 325h4v4h-4zM65 325h4v4h-4zM733 325h4v4h-4zM757 337h4v4h-4zM433 341h4v4h-4zM449 341h4v4h-4zM449 357h4v4h-4zM629 357h4v4h-4zM689 357h4v4h-4zM741 357h4v4h-4zM777 357h4v4h-4zM429 361h4v4h-4zM613 361h4v4h-4zM621 361h4v4h-4zM641 361h4v4h-4zM773 361h4v4h-4z"/><path fill="#646054" fill-opacity="0.50" d="M593 285h4v4h-4zM753 285h4v4h-4zM69 289h4v4h-4zM73 289h4v4h-4zM317 289h4v4h-4zM325 289h4v4h-4zM429 289h4v4h-4zM601 289h4v4h-4zM445 301h4v4h-4zM325 305h4v4h-4zM425 305h4v4h-4zM445 305h4v4h-4zM645 305h4v4h-4zM749 305h4v4h-4zM697 321h4v4h-4zM745 321h4v4h-4zM681 325h4v4h-4zM69 337h4v4h-4zM605 337h4v4h-4zM613 337h4v4h-4zM653 341h4v4h-4zM701 341h4v4h-4zM737 341h4v4h-4zM773 357h4v4h-4zM685 361h4v4h-4zM697 361h4v4h-4zM777 361h4v4h-4z"/><path fill="#646054" fill-opacity="0.60" d="M425 285h4v4h-4zM621 301h4v4h-4zM761 305h4v4h-4zM69 341h4v4h-4zM785 341h4v4h-4zM613 357h4v4h-4zM753 357h4v4h-4z"/><path fill="#646054" fill-opacity="0.70" d="M621 305h4v4h-4z"/><path fill="#50586c" fill-opacity="0.10" d="M441 281h4v4h-4zM641 281h4v4h-4zM689 281h4v4h-4zM745 281h4v4h-4zM757 285h4v4h-4zM617 301h4v4h-4zM617 317h4v4h-4zM433 329h4v4h-4zM693 337h4v4h-4zM705 337h4v4h-4zM749 341h4v4h-4zM781 345h4v4h-4zM429 353h4v4h-4zM609 353h4v4h-4zM617 353h4v4h-4zM685 353h4v4h-4zM737 353h4v4h-4zM753 353h4v4h-4z"/><path fill="#50586c" fill-opacity="0.20" d="M65 281h4v4h-4zM601 281h4v4h-4zM785 281h4v4h-4zM693 285h4v4h-4zM689 301h4v4h-4zM693 301h4v4h-4zM633 309h4v4h-4zM685 309h4v4h-4zM689 309h4v4h-4zM757 309h4v4h-4zM417 317h4v4h-4zM429 317h4v4h-4zM781 317h4v4h-4zM617 321h4v4h-4zM489 325h4v4h-4zM77 341h4v4h-4zM421 345h4v4h-4zM429 345h4v4h-4zM445 345h4v4h-4zM601 345h4v4h-4zM609 345h4v4h-4zM641 345h4v4h-4zM741 345h4v4h-4zM777 345h4v4h-4zM57 353h4v4h-4zM693 357h4v4h-4zM765 357h4v4h-4z"/><path fill="#50586c" fill-opacity="0.30" d="M773 281h4v4h-4zM605 285h4v4h-4zM685 285h4v4h-4zM321 289h4v4h-4zM629 289h4v4h-4zM637 301h4v4h-4zM485 305h4v4h-4zM489 305h4v4h-4zM769 305h4v4h-4zM609 317h4v4h-4zM437 321h4v4h-4zM757 325h4v4h-4zM485 337h4v4h-4zM601 341h4v4h-4zM701 345h4v4h-4zM649 353h4v4h-4zM489 357h4v4h-4zM605 357h4v4h-4zM77 361h4v4h-4zM441 361h4v4h-4z"/><path fill="#50586c" fill-opacity="0.40" d="M701 281h4v4h-4zM761 285h4v4h-4zM781 289h4v4h-4zM441 301h4v4h-4zM625 301h4v4h-4zM633 301h4v4h-4zM737 301h4v4h-4zM61 305h4v4h-4zM429 305h4v4h-4zM605 305h4v4h-4zM641 305h4v4h-4zM701 305h4v4h-4zM777 305h4v4h-4zM593 309h4v4h-4zM449 321h4v4h-4zM605 321h4v4h-4zM753 321h4v4h-4zM641 325h4v4h-4zM645 325h4v4h-4zM773 325h4v4h-4zM437 337h4v4h-4zM621 337h4v4h-4zM637 337h4v4h-4zM689 337h4v4h-4zM73 341h4v4h-4zM417 341h4v4h-4zM637 341h4v4h-4zM769 353h4v4h-4zM645 357h4v4h-4zM645 361h4v4h-4zM737 361h4v4h-4z"/><path fill="#50586c" fill-opacity="0.50" d="M329 285h4v4h-4zM601 285h4v4h-4zM785 285h4v4h-4zM601 301h4v4h-4zM65 305h4v4h-4zM329 305h4v4h-4zM65 321h4v4h-4zM681 321h4v4h-4zM329 325h4v4h-4zM57 337h4v4h-4zM57 341h4v4h-4zM613 341h4v4h-4zM621 357h4v4h-4zM625 357h4v4h-4zM653 357h4v4h-4zM745 357h4v4h-4z"/><path fill="#50586c" fill-opacity="0.60" d="M317 285h4v4h-4zM441 285h4v4h-4zM445 285h4v4h-4zM649 285h4v4h-4zM781 301h4v4h-4zM625 305h4v4h-4zM649 321h4v4h-4zM649 341h4v4h-4zM753 341h4v4h-4z"/><path fill="#50586c" fill-opacity="0.70" d="M61 357h4v4h-4z"/><path fill="#50586c" fill-opacity="0.80" d="M69 305h4v4h-4z"/><path fill="#645856" fill-opacity="0.10" d="M425 281h4v4h-4zM629 281h4v4h-4zM705 281h4v4h-4zM765 281h4v4h-4zM597 285h4v4h-4zM757 293h4v4h-4zM333 301h4v4h-4zM757 301h4v4h-4zM77 305h4v4h-4zM629 309h4v4h-4zM649 309h4v4h-4zM701 309h4v4h-4zM433 317h4v4h-4zM705 317h4v4h-4zM757 317h4v4h-4zM489 345h4v4h-4zM621 345h4v4h-4zM601 353h4v4h-4zM621 353h4v4h-4zM633 353h4v4h-4zM705 357h4v4h-4z"/><path fill="#645856" fill-opacity="0.20" d="M421 281h4v4h-4zM437 281h4v4h-4zM749 281h4v4h-4zM73 285h4v4h-4zM617 289h4v4h-4zM437 309h4v4h-4zM697 309h4v4h-4zM741 309h4v4h-4zM73 317h4v4h-4zM445 317h4v4h-4zM485 317h4v4h-4zM753 317h4v4h-4zM785 317h4v4h-4zM601 321h4v4h-4zM689 321h4v4h-4zM633 337h4v4h-4zM685 337h4v4h-4zM437 345h4v4h-4zM617 345h4v4h-4zM685 345h4v4h-4zM689 345h4v4h-4zM733 345h4v4h-4zM741 353h4v4h-4zM773 353h4v4h-4zM421 357h4v4h-4zM437 361h4v4h-4zM489 361h4v4h-4zM633 361h4v4h-4zM749 361h4v4h-4z"/><path fill="#645856" fill-opacity="0.30" d="M637 281h4v4h-4zM489 285h4v4h-4zM773 285h4v4h-4zM437 289h4v4h-4zM637 289h4v4h-4zM701 289h4v4h-4zM641 301h4v4h-4zM685 305h4v4h-4zM737 305h4v4h-4zM773 305h4v4h-4zM433 309h4v4h-4zM605 309h4v4h-4zM745 309h4v4h-4zM773 309h4v4h-4zM697 317h4v4h-4zM745 317h4v4h-4zM485 321h4v4h-4zM649 325h4v4h-4zM77 337h4v4h-4zM641 337h4v4h-4zM645 337h4v4h-4zM329 341h4v4h-4zM445 341h4v4h-4zM485 341h4v4h-4zM69 345h4v4h-4zM73 345h4v4h-4zM329 345h4v4h-4zM701 353h4v4h-4zM445 357h4v4h-4zM485 357h4v4h-4zM633 357h4v4h-4zM449 361h4v4h-4zM601 361h4v4h-4zM653 361h4v4h-4zM781 361h4v4h-4z"/><path fill="#645856" fill-opacity="0.40" d="M649 281h4v4h-4zM641 285h4v4h-4zM701 285h4v4h-4zM61 289h4v4h-4zM65 289h4v4h-4zM593 301h4v4h-4zM437 305h4v4h-4zM641 321h4v4h-4zM57 325h4v4h-4zM433 325h4v4h-4zM445 325h4v4h-4zM621 325h4v4h-4zM625 325h4v4h-4zM629 325h4v4h-4zM689 325h4v4h-4zM737 325h4v4h-4zM65 337h4v4h-4zM653 337h4v4h-4zM681 337h4v4h-4zM737 337h4v4h-4zM761 337h4v4h-4zM429 341h4v4h-4zM645 341h4v4h-4zM697 341h4v4h-4zM65 361h4v4h-4zM757 361h4v4h-4zM761 361h4v4h-4z"/><path fill="#645856" fill-opacity="0.50" d="M613 285h4v4h-4zM57 289h4v4h-4zM593 289h4v4h-4zM737 289h4v4h-4zM765 289h4v4h-4zM69 301h4v4h-4zM329 301h4v4h-4zM649 301h4v4h-4zM761 301h4v4h-4zM601 305h4v4h-4zM633 305h4v4h-4zM57 321h4v4h-4zM769 321h4v4h-4zM613 325h4v4h-4zM741 325h4v4h-4zM777 325h4v4h-4zM429 337h4v4h-4zM697 337h4v4h-4zM421 341h4v4h-4zM773 341h4v4h-4zM73 357h4v4h-4zM437 357h4v4h-4zM733 357h4v4h-4zM433 361h4v4h-4zM753 361h4v4h-4z"/><path fill="#645856" fill-opacity="0.60" d="M765 285h4v4h-4zM441 341h4v4h-4zM425 357h4v4h-4zM649 357h4v4h-4zM785 357h4v4h-4zM69 361h4v4h-4z"/><path fill="#645856" fill-opacity="0.70" d="M613 321h4v4h-4z"/><path fill="#585c5c" fill-opacity="0.10" d="M61 281h4v4h-4zM317 281h4v4h-4zM609 281h4v4h-4zM653 281h4v4h-4zM737 281h4v4h-4zM769 281h4v4h-4zM433 285h4v4h-4zM617 285h4v4h-4zM741 285h4v4h-4zM597 301h4v4h-4zM441 309h4v4h-4zM769 309h4v4h-4zM781 309h4v4h-4zM329 317h4v4h-4zM621 317h4v4h-4zM641 317h4v4h-4zM653 317h4v4h-4zM685 317h4v4h-4zM693 317h4v4h-4zM737 317h4v4h-4zM741 317h4v4h-4zM777 317h4v4h-4zM333 325h4v4h-4zM617 337h4v4h-4zM693 341h4v4h-4zM333 345h4v4h-4zM441 345h4v4h-4zM449 345h4v4h-4zM625 345h4v4h-4zM633 345h4v4h-4zM649 345h4v4h-4zM705 345h4v4h-4zM745 345h4v4h-4zM433 353h4v4h-4zM437 353h4v4h-4zM441 353h4v4h-4zM645 353h4v4h-4zM705 353h4v4h-4zM765 353h4v4h-4zM777 353h4v4h-4zM617 357h4v4h-4z"/><path fill="#585c5c" fill-opacity="0.20" d="M73 281h4v4h-4zM325 281h4v4h-4zM485 281h4v4h-4zM685 281h4v4h-4zM761 281h4v4h-4zM421 285h4v4h-4zM757 289h4v4h-4zM769 289h4v4h-4zM65 309h4v4h-4zM325 309h4v4h-4zM609 309h4v4h-4zM625 309h4v4h-4zM777 309h4v4h-4zM65 317h4v4h-4zM761 317h4v4h-4zM765 321h4v4h-4zM633 325h4v4h-4zM749 325h4v4h-4zM617 341h4v4h-4zM65 345h4v4h-4zM77 345h4v4h-4zM425 345h4v4h-4zM761 345h4v4h-4zM73 353h4v4h-4zM485 353h4v4h-4zM681 353h4v4h-4zM697 353h4v4h-4zM761 353h4v4h-4z"/><path fill="#585c5c" fill-opacity="0.30" d="M753 281h4v4h-4zM485 285h4v4h-4zM697 285h4v4h-4zM485 289h4v4h-4zM605 301h4v4h-4zM685 301h4v4h-4zM609 305h4v4h-4zM317 309h4v4h-4zM621 309h4v4h-4zM637 309h4v4h-4zM681 309h4v4h-4zM693 309h4v4h-4zM649 317h4v4h-4zM421 321h4v4h-4zM633 321h4v4h-4zM685 321h4v4h-4zM609 325h4v4h-4zM653 325h4v4h-4zM61 337h4v4h-4zM437 341h4v4h-4zM613 345h4v4h-4zM69 353h4v4h-4zM617 361h4v4h-4z"/><path fill="#585c5c" fill-opacity="0.40" d="M65 285h4v4h-4zM425 289h4v4h-4zM633 289h4v4h-4zM753 289h4v4h-4zM613 301h4v4h-4zM317 305h4v4h-4zM629 305h4v4h-4zM693 305h4v4h-4zM745 305h4v4h-4zM609 321h4v4h-4zM629 321h4v4h-4zM733 321h4v4h-4zM685 325h4v4h-4zM761 325h4v4h-4zM445 337h4v4h-4zM777 341h4v4h-4zM637 353h4v4h-4zM329 357h4v4h-4zM61 361h4v4h-4zM637 361h4v4h-4z"/><path fill="#585c5c" fill-opacity="0.50" d="M57 285h4v4h-4zM325 285h4v4h-4zM633 285h4v4h-4zM645 285h4v4h-4zM745 289h4v4h-4zM325 301h4v4h-4zM749 301h4v4h-4zM765 301h4v4h-4zM689 305h4v4h-4zM621 321h4v4h-4zM625 321h4v4h-4zM741 321h4v4h-4zM697 325h4v4h-4zM745 325h4v4h-4zM701 337h4v4h-4zM745 337h4v4h-4zM769 337h4v4h-4zM429 357h4v4h-4zM697 357h4v4h-4zM769 357h4v4h-4zM57 361h4v4h-4zM733 361h4v4h-4zM769 361h4v4h-4z"/><path fill="#585c5c" fill-opacity="0.60" d="M429 321h4v4h-4zM757 321h4v4h-4zM781 321h4v4h-4zM421 337h4v4h-4zM65 341h4v4h-4zM425 341h4v4h-4zM609 341h4v4h-4zM621 341h4v4h-4zM625 341h4v4h-4zM757 341h4v4h-4zM57 357h4v4h-4zM781 357h4v4h-4z"/><path fill="#585c5c" fill-opacity="0.70" d="M69 285h4v4h-4zM781 285h4v4h-4zM781 305h4v4h-4z"/><path fill="#2878c8" fill-opacity="0.10" d="M145 281h4v4h-4zM525 281h4v4h-4zM529 281h4v4h-4zM545 289h4v4h-4zM101 301h4v4h-4zM149 301h4v4h-4zM201 301h4v4h-4zM357 305h4v4h-4zM133 309h4v4h-4zM205 309h4v4h-4zM93 317h4v4h-4zM561 317h4v4h-4zM569 317h4v4h-4zM357 325h4v4h-4zM137 337h4v4h-4zM181 337h4v4h-4zM197 341h4v4h-4zM145 345h4v4h-4zM541 345h4v4h-4zM145 353h4v4h-4zM525 353h4v4h-4zM569 353h4v4h-4zM541 357h4v4h-4z"/><path fill="#2878c8" fill-opacity="0.20" d="M521 281h4v4h-4zM549 281h4v4h-4zM205 285h4v4h-4zM553 289h4v4h-4zM97 301h4v4h-4zM349 301h4v4h-4zM145 309h4v4h-4zM201 309h4v4h-4zM149 317h4v4h-4zM181 317h4v4h-4zM521 325h4v4h-4zM97 337h4v4h-4zM117 337h4v4h-4zM185 337h4v4h-4zM349 345h4v4h-4zM533 361h4v4h-4z"/><path fill="#2878c8" fill-opacity="0.30" d="M169 285h4v4h-4zM93 289h4v4h-4zM109 289h4v4h-4zM113 289h4v4h-4zM161 289h4v4h-4zM169 289h4v4h-4zM185 289h4v4h-4zM197 289h4v4h-4zM345 289h4v4h-4zM529 289h4v4h-4zM537 289h4v4h-4zM141 301h4v4h-4zM181 301h4v4h-4zM209 301h4v4h-4zM341 301h4v4h-4zM533 301h4v4h-4zM89 305h4v4h-4zM161 305h4v4h-4zM193 305h4v4h-4zM177 317h4v4h-4zM517 321h4v4h-4zM93 325h4v4h-4zM133 325h4v4h-4zM345 325h4v4h-4zM349 325h4v4h-4zM89 337h4v4h-4zM129 337h4v4h-4zM549 337h4v4h-4zM553 337h4v4h-4zM545 341h4v4h-4zM129 353h4v4h-4zM129 357h4v4h-4zM113 361h4v4h-4zM349 361h4v4h-4zM553 361h4v4h-4zM561 361h4v4h-4z"/><path fill="#2878c8" fill-opacity="0.40" d="M521 285h4v4h-4zM97 289h4v4h-4zM101 289h4v4h-4zM189 289h4v4h-4zM353 289h4v4h-4zM557 289h4v4h-4zM101 305h4v4h-4zM197 305h4v4h-4zM349 305h4v4h-4zM521 337h4v4h-4zM129 341h4v4h-4zM185 341h4v4h-4zM549 341h4v4h-4zM109 357h4v4h-4zM101 361h4v4h-4zM149 361h4v4h-4z"/><path fill="#2878c8" fill-opacity="0.50" d="M105 285h4v4h-4zM133 289h4v4h-4zM141 289h4v4h-4zM145 305h4v4h-4zM169 305h4v4h-4zM561 305h4v4h-4zM565 305h4v4h-4zM105 321h4v4h-4zM161 321h4v4h-4zM341 321h4v4h-4zM341 325h4v4h-4zM117 341h4v4h-4zM117 357h4v4h-4zM565 357h4v4h-4z"/><path fill="#2878c8" fill-opacity="0.60" d="M529 321h4v4h-4zM193 341h4v4h-4z"/><path fill="#2878c8" fill-opacity="0.70" d="M105 305h4v4h-4z"/><path fill="#3c87cd" fill-opacity="0.10" d="M557 281h4v4h-4zM529 293h4v4h-4zM205 301h4v4h-4zM245 301h4v4h-4zM545 301h4v4h-4zM177 309h4v4h-4zM213 309h4v4h-4zM225 309h4v4h-4zM537 309h4v4h-4zM565 309h4v4h-4zM569 309h4v4h-4zM133 317h4v4h-4zM557 317h4v4h-4zM173 321h4v4h-4zM189 337h4v4h-4zM345 337h4v4h-4zM189 341h4v4h-4zM533 341h4v4h-4zM121 345h4v4h-4zM529 353h4v4h-4zM545 353h4v4h-4zM533 357h4v4h-4zM157 361h4v4h-4z"/><path fill="#3c87cd" fill-opacity="0.20" d="M553 281h4v4h-4zM149 285h4v4h-4zM193 289h4v4h-4zM525 289h4v4h-4zM117 301h4v4h-4zM153 301h4v4h-4zM173 301h4v4h-4zM213 301h4v4h-4zM353 301h4v4h-4zM233 305h4v4h-4zM245 305h4v4h-4zM569 305h4v4h-4zM89 309h4v4h-4zM137 309h4v4h-4zM153 309h4v4h-4zM173 309h4v4h-4zM221 309h4v4h-4zM233 309h4v4h-4zM349 309h4v4h-4zM521 309h4v4h-4zM553 309h4v4h-4zM557 309h4v4h-4zM89 317h4v4h-4zM517 317h4v4h-4zM93 321h4v4h-4zM181 321h4v4h-4zM521 321h4v4h-4zM121 325h4v4h-4zM141 325h4v4h-4zM569 325h4v4h-4zM97 345h4v4h-4zM129 345h4v4h-4zM161 345h4v4h-4zM185 345h4v4h-4zM557 345h4v4h-4zM89 353h4v4h-4zM93 357h4v4h-4zM129 361h4v4h-4zM541 361h4v4h-4z"/><path fill="#3c87cd" fill-opacity="0.30" d="M161 285h4v4h-4zM553 285h4v4h-4zM177 289h4v4h-4zM349 289h4v4h-4zM89 301h4v4h-4zM225 301h4v4h-4zM553 301h4v4h-4zM525 305h4v4h-4zM109 325h4v4h-4zM173 325h4v4h-4zM185 325h4v4h-4zM545 325h4v4h-4zM549 325h4v4h-4zM561 325h4v4h-4zM165 337h4v4h-4zM173 337h4v4h-4zM517 337h4v4h-4zM89 341h4v4h-4zM161 341h4v4h-4zM517 341h4v4h-4zM553 345h4v4h-4zM121 357h4v4h-4zM545 361h4v4h-4z"/><path fill="#3c87cd" fill-opacity="0.40" d="M145 285h4v4h-4zM185 285h4v4h-4zM565 285h4v4h-4zM117 289h4v4h-4zM157 289h4v4h-4zM145 301h4v4h-4zM165 301h4v4h-4zM221 301h4v4h-4zM237 301h4v4h-4zM345 305h4v4h-4zM141 321h4v4h-4zM189 321h4v4h-4zM549 321h4v4h-4zM97 325h4v4h-4zM129 325h4v4h-4zM189 325h4v4h-4zM517 325h4v4h-4zM109 341h4v4h-4zM113 341h4v4h-4zM137 341h4v4h-4zM173 341h4v4h-4zM349 341h4v4h-4zM561 357h4v4h-4zM97 361h4v4h-4zM117 361h4v4h-4zM525 361h4v4h-4z"/><path fill="#3c87cd" fill-opacity="0.50" d="M133 285h4v4h-4zM181 285h4v4h-4zM353 285h4v4h-4zM549 285h4v4h-4zM189 301h4v4h-4zM129 305h4v4h-4zM153 305h4v4h-4zM229 305h4v4h-4zM97 321h4v4h-4zM113 321h4v4h-4zM177 321h4v4h-4zM565 321h4v4h-4zM105 325h4v4h-4zM161 325h4v4h-4zM165 341h4v4h-4zM97 357h4v4h-4zM105 357h4v4h-4zM341 357h4v4h-4zM537 357h4v4h-4z"/><path fill="#3c87cd" fill-opacity="0.60" d="M129 285h4v4h-4z"/><path fill="#3c87cd" fill-opacity="0.70" d="M177 341h4v4h-4z"/><path fill="#326ebe" fill-opacity="0.10" d="M189 281h4v4h-4zM341 281h4v4h-4zM561 281h4v4h-4zM205 289h4v4h-4zM357 289h4v4h-4zM517 289h4v4h-4zM217 301h4v4h-4zM217 305h4v4h-4zM529 305h4v4h-4zM113 309h4v4h-4zM129 309h4v4h-4zM141 309h4v4h-4zM149 309h4v4h-4zM157 309h4v4h-4zM181 309h4v4h-4zM229 309h4v4h-4zM561 309h4v4h-4zM141 317h4v4h-4zM537 317h4v4h-4zM165 325h4v4h-4zM197 337h4v4h-4zM357 341h4v4h-4zM93 345h4v4h-4zM181 345h4v4h-4zM345 345h4v4h-4zM545 345h4v4h-4zM549 345h4v4h-4zM97 353h4v4h-4zM341 353h4v4h-4zM557 353h4v4h-4zM533 365h4v4h-4z"/><path fill="#326ebe" fill-opacity="0.20" d="M197 281h4v4h-4zM121 289h4v4h-4zM149 289h4v4h-4zM197 301h4v4h-4zM165 309h4v4h-4zM237 309h4v4h-4zM145 317h4v4h-4zM173 317h4v4h-4zM189 317h4v4h-4zM521 317h4v4h-4zM193 321h4v4h-4zM553 321h4v4h-4zM525 325h4v4h-4zM109 337h4v4h-4zM149 337h4v4h-4zM349 337h4v4h-4zM569 337h4v4h-4zM553 341h4v4h-4zM117 345h4v4h-4zM353 345h4v4h-4z"/><path fill="#326ebe" fill-opacity="0.30" d="M121 285h4v4h-4zM137 285h4v4h-4zM345 285h4v4h-4zM557 285h4v4h-4zM525 301h4v4h-4zM537 301h4v4h-4zM181 305h4v4h-4zM221 305h4v4h-4zM529 309h4v4h-4zM345 321h4v4h-4zM545 321h4v4h-4zM113 325h4v4h-4zM169 325h4v4h-4zM541 325h4v4h-4zM565 325h4v4h-4zM145 337h4v4h-4zM169 337h4v4h-4zM545 337h4v4h-4zM557 341h4v4h-4zM517 345h4v4h-4zM553 353h4v4h-4zM89 357h4v4h-4zM345 361h4v4h-4z"/><path fill="#326ebe" fill-opacity="0.40" d="M109 285h4v4h-4zM177 285h4v4h-4zM197 285h4v4h-4zM541 285h4v4h-4zM137 289h4v4h-4zM181 289h4v4h-4zM541 289h4v4h-4zM561 289h4v4h-4zM133 301h4v4h-4zM229 301h4v4h-4zM113 305h4v4h-4zM173 305h4v4h-4zM137 321h4v4h-4zM349 321h4v4h-4zM137 325h4v4h-4zM529 325h4v4h-4zM537 325h4v4h-4zM141 341h4v4h-4zM149 341h4v4h-4zM181 341h4v4h-4zM561 341h4v4h-4zM141 357h4v4h-4zM525 357h4v4h-4zM545 357h4v4h-4zM529 361h4v4h-4z"/><path fill="#326ebe" fill-opacity="0.50" d="M537 285h4v4h-4zM105 289h4v4h-4zM341 289h4v4h-4zM97 305h4v4h-4zM137 305h4v4h-4zM149 305h4v4h-4zM177 305h4v4h-4zM97 341h4v4h-4zM145 341h4v4h-4zM529 341h4v4h-4zM353 357h4v4h-4zM105 361h4v4h-4z"/><path fill="#326ebe" fill-opacity="0.60" d="M165 285h4v4h-4zM537 341h4v4h-4zM565 341h4v4h-4z"/><path fill="#326ebe" fill-opacity="0.70" d="M341 305h4v4h-4z"/><path fill="#5596c8" fill-opacity="0.10" d="M93 281h4v4h-4zM97 281h4v4h-4zM129 281h4v4h-4zM149 281h4v4h-4zM193 281h4v4h-4zM569 281h4v4h-4zM193 285h4v4h-4zM517 285h4v4h-4zM533 293h4v4h-4zM121 301h4v4h-4zM161 301h4v4h-4zM517 305h4v4h-4zM101 309h4v4h-4zM161 309h4v4h-4zM189 309h4v4h-4zM129 317h4v4h-4zM137 317h4v4h-4zM161 317h4v4h-4zM169 317h4v4h-4zM341 317h4v4h-4zM545 317h4v4h-4zM133 337h4v4h-4zM157 337h4v4h-4zM101 345h4v4h-4zM109 345h4v4h-4zM113 345h4v4h-4zM149 345h4v4h-4zM177 345h4v4h-4zM569 345h4v4h-4zM541 353h4v4h-4zM549 353h4v4h-4zM157 357h4v4h-4z"/><path fill="#5596c8" fill-opacity="0.20" d="M93 285h4v4h-4zM569 289h4v4h-4zM113 301h4v4h-4zM137 301h4v4h-4zM169 301h4v4h-4zM569 301h4v4h-4zM553 305h4v4h-4zM197 309h4v4h-4zM209 309h4v4h-4zM241 309h4v4h-4zM353 309h4v4h-4zM533 309h4v4h-4zM541 309h4v4h-4zM549 309h4v4h-4zM185 317h4v4h-4zM525 317h4v4h-4zM529 317h4v4h-4zM105 337h4v4h-4zM569 341h4v4h-4zM105 345h4v4h-4zM133 345h4v4h-4zM137 345h4v4h-4zM141 345h4v4h-4zM169 345h4v4h-4zM521 345h4v4h-4zM533 345h4v4h-4zM133 353h4v4h-4zM133 357h4v4h-4zM553 357h4v4h-4zM521 361h4v4h-4z"/><path fill="#5596c8" fill-opacity="0.30" d="M541 281h4v4h-4zM89 285h4v4h-4zM89 289h4v4h-4zM129 289h4v4h-4zM533 289h4v4h-4zM93 301h4v4h-4zM93 305h4v4h-4zM121 305h4v4h-4zM157 305h4v4h-4zM237 305h4v4h-4zM89 321h4v4h-4zM129 321h4v4h-4zM89 325h4v4h-4zM153 325h4v4h-4zM93 337h4v4h-4zM561 337h4v4h-4zM93 341h4v4h-4zM121 341h4v4h-4zM133 341h4v4h-4zM153 345h4v4h-4zM565 353h4v4h-4zM557 357h4v4h-4zM89 361h4v4h-4zM93 361h4v4h-4zM109 361h4v4h-4zM141 361h4v4h-4zM565 361h4v4h-4z"/><path fill="#5596c8" fill-opacity="0.40" d="M157 285h4v4h-4zM189 285h4v4h-4zM529 285h4v4h-4zM533 285h4v4h-4zM165 289h4v4h-4zM549 289h4v4h-4zM129 301h4v4h-4zM241 301h4v4h-4zM521 301h4v4h-4zM541 301h4v4h-4zM549 301h4v4h-4zM561 301h4v4h-4zM241 305h4v4h-4zM521 305h4v4h-4zM541 305h4v4h-4zM109 321h4v4h-4zM133 321h4v4h-4zM153 321h4v4h-4zM169 321h4v4h-4zM525 321h4v4h-4zM101 325h4v4h-4zM117 325h4v4h-4zM353 325h4v4h-4zM161 337h4v4h-4zM565 337h4v4h-4zM349 357h4v4h-4zM549 357h4v4h-4zM145 361h4v4h-4zM353 361h4v4h-4zM557 361h4v4h-4z"/><path fill="#5596c8" fill-opacity="0.50" d="M97 285h4v4h-4zM117 285h4v4h-4zM525 285h4v4h-4zM521 289h4v4h-4zM117 305h4v4h-4zM133 305h4v4h-4zM537 305h4v4h-4zM549 305h4v4h-4zM117 321h4v4h-4zM149 321h4v4h-4zM157 321h4v4h-4zM537 321h4v4h-4zM353 341h4v4h-4zM525 341h4v4h-4zM113 357h4v4h-4zM153 361h4v4h-4zM341 361h4v4h-4z"/><path fill="#5596c8" fill-opacity="0.60" d="M205 305h4v4h-4z"/><path fill="#5596c8" fill-opacity="0.70" d="M341 341h4v4h-4z"/><path fill="#467dd7" fill-opacity="0.10" d="M133 281h4v4h-4zM137 281h4v4h-4zM165 281h4v4h-4zM533 281h4v4h-4zM537 281h4v4h-4zM545 285h4v4h-4zM345 301h4v4h-4zM517 301h4v4h-4zM529 301h4v4h-4zM545 305h4v4h-4zM93 309h4v4h-4zM109 309h4v4h-4zM121 309h4v4h-4zM169 309h4v4h-4zM193 309h4v4h-4zM341 309h4v4h-4zM345 309h4v4h-4zM97 317h4v4h-4zM541 317h4v4h-4zM549 317h4v4h-4zM165 321h4v4h-4zM533 321h4v4h-4zM193 325h4v4h-4zM533 329h4v4h-4zM101 337h4v4h-4zM121 337h4v4h-4zM153 337h4v4h-4zM165 345h4v4h-4zM173 345h4v4h-4zM341 345h4v4h-4zM525 345h4v4h-4zM537 345h4v4h-4zM561 345h4v4h-4zM565 345h4v4h-4zM93 353h4v4h-4zM149 353h4v4h-4zM153 353h4v4h-4zM517 353h4v4h-4zM537 353h4v4h-4zM561 353h4v4h-4zM357 361h4v4h-4z"/><path fill="#467dd7" fill-opacity="0.20" d="M89 281h4v4h-4zM201 281h4v4h-4zM565 289h4v4h-4zM105 301h4v4h-4zM109 301h4v4h-4zM157 301h4v4h-4zM177 301h4v4h-4zM193 301h4v4h-4zM233 301h4v4h-4zM557 301h4v4h-4zM225 305h4v4h-4zM97 309h4v4h-4zM105 309h4v4h-4zM117 309h4v4h-4zM525 309h4v4h-4zM533 325h4v4h-4zM113 337h4v4h-4zM141 337h4v4h-4zM353 337h4v4h-4zM541 337h4v4h-4zM557 337h4v4h-4zM89 345h4v4h-4zM193 345h4v4h-4zM529 345h4v4h-4zM521 357h4v4h-4zM121 361h4v4h-4zM133 361h4v4h-4zM569 361h4v4h-4z"/><path fill="#467dd7" fill-opacity="0.30" d="M565 281h4v4h-4zM101 285h4v4h-4zM569 285h4v4h-4zM145 289h4v4h-4zM533 305h4v4h-4zM557 305h4v4h-4zM553 317h4v4h-4zM565 317h4v4h-4zM101 321h4v4h-4zM121 321h4v4h-4zM541 321h4v4h-4zM557 321h4v4h-4zM569 321h4v4h-4zM145 325h4v4h-4zM149 325h4v4h-4zM157 325h4v4h-4zM177 325h4v4h-4zM181 325h4v4h-4zM553 325h4v4h-4zM177 337h4v4h-4zM341 337h4v4h-4zM529 337h4v4h-4zM541 341h4v4h-4zM101 357h4v4h-4zM345 357h4v4h-4zM569 357h4v4h-4zM549 361h4v4h-4z"/><path fill="#467dd7" fill-opacity="0.40" d="M141 285h4v4h-4zM201 285h4v4h-4zM349 285h4v4h-4zM201 289h4v4h-4zM565 301h4v4h-4zM109 305h4v4h-4zM165 305h4v4h-4zM189 305h4v4h-4zM201 305h4v4h-4zM213 305h4v4h-4zM145 321h4v4h-4zM185 321h4v4h-4zM561 321h4v4h-4zM557 325h4v4h-4zM193 337h4v4h-4zM525 337h4v4h-4zM537 337h4v4h-4zM101 341h4v4h-4zM345 341h4v4h-4zM521 341h4v4h-4zM137 357h4v4h-4zM145 357h4v4h-4zM149 357h4v4h-4zM517 357h4v4h-4zM137 361h4v4h-4zM517 361h4v4h-4zM537 361h4v4h-4z"/><path fill="#467dd7" fill-opacity="0.50" d="M113 285h4v4h-4zM341 285h4v4h-4zM561 285h4v4h-4zM141 305h4v4h-4zM209 305h4v4h-4zM353 305h4v4h-4zM353 321h4v4h-4zM153 357h4v4h-4zM529 357h4v4h-4z"/><path fill="#467dd7" fill-opacity="0.60" d="M153 341h4v4h-4zM169 341h4v4h-4z"/><path fill="#467dd7" fill-opacity="0.70" d="M105 341h4v4h-4z"/><path fill="#2878c8" fill-opacity="0.10" d="M617 537h4v4h-4zM621 541h4v4h-4z"/><path fill="#2878c8" fill-opacity="0.20" d="M857 537h4v4h-4z"/><path fill="#2878c8" fill-opacity="0.30" d="M893 533h4v4h-4z"/><path fill="#2878c8" fill-opacity="0.40" d="M613 533h4v4h-4zM649 533h4v4h-4z"/><path fill="#2878c8" fill-opacity="0.50" d="M645 533h4v4h-4zM653 533h4v4h-4zM913 537h4v4h-4z"/><path fill="#2878c8" fill-opacity="0.60" d="M853 533h4v4h-4zM649 537h4v4h-4zM917 537h4v4h-4z"/><path fill="#3c87cd" fill-opacity="0.10" d="M857 533h4v4h-4zM849 537h4v4h-4z"/><path fill="#3c87cd" fill-opacity="0.30" d="M597 537h4v4h-4zM901 537h4v4h-4z"/><path fill="#3c87cd" fill-opacity="0.50" d="M913 533h4v4h-4zM601 537h4v4h-4zM625 537h4v4h-4zM629 537h4v4h-4zM889 537h4v4h-4z"/><path fill="#3c87cd" fill-opacity="0.60" d="M861 533h4v4h-4zM917 533h4v4h-4zM609 537h4v4h-4zM885 537h4v4h-4z"/><path fill="#326ebe" fill-opacity="0.10" d="M881 541h4v4h-4z"/><path fill="#326ebe" fill-opacity="0.20" d="M621 537h4v4h-4zM877 537h4v4h-4z"/><path fill="#326ebe" fill-opacity="0.40" d="M865 533h4v4h-4zM909 533h4v4h-4zM893 537h4v4h-4z"/><path fill="#326ebe" fill-opacity="0.50" d="M897 533h4v4h-4z"/><path fill="#326ebe" fill-opacity="0.60" d="M633 533h4v4h-4zM589 537h4v4h-4zM641 537h4v4h-4zM657 537h4v4h-4zM873 537h4v4h-4z"/><path fill="#326ebe" fill-opacity="0.70" d="M625 533h4v4h-4zM613 537h4v4h-4z"/><path fill="#326ebe" fill-opacity="0.90" d="M641 533h4v4h-4z"/><path fill="#5596c8" fill-opacity="0.10" d="M849 533h4v4h-4zM637 537h4v4h-4z"/><path fill="#5596c8" fill-opacity="0.20" d="M629 533h4v4h-4zM881 533h4v4h-4z"/><path fill="#5596c8" fill-opacity="0.30" d="M617 533h4v4h-4zM873 533h4v4h-4z"/><path fill="#5596c8" fill-opacity="0.40" d="M593 533h4v4h-4zM597 533h4v4h-4zM877 533h4v4h-4zM605 537h4v4h-4z"/><path fill="#5596c8" fill-opacity="0.50" d="M905 533h4v4h-4zM861 537h4v4h-4zM865 537h4v4h-4z"/><path fill="#5596c8" fill-opacity="0.60" d="M601 533h4v4h-4zM633 537h4v4h-4zM869 537h4v4h-4zM909 537h4v4h-4z"/><path fill="#5596c8" fill-opacity="0.70" d="M853 537h4v4h-4z"/><path fill="#5596c8" fill-opacity="0.80" d="M885 533h4v4h-4z"/><path fill="#467dd7" fill-opacity="0.10" d="M621 533h4v4h-4zM637 533h4v4h-4z"/><path fill="#467dd7" fill-opacity="0.30" d="M589 533h4v4h-4zM593 537h4v4h-4zM645 537h4v4h-4z"/><path fill="#467dd7" fill-opacity="0.40" d="M605 533h4v4h-4zM881 537h4v4h-4zM897 537h4v4h-4z"/><path fill="#467dd7" fill-opacity="0.50" d="M869 533h4v4h-4zM653 537h4v4h-4zM905 537h4v4h-4z"/><path fill="#467dd7" fill-opacity="0.60" d="M609 533h4v4h-4zM657 533h4v4h-4zM661 533h4v4h-4zM889 533h4v4h-4zM901 533h4v4h-4zM661 537h4v4h-4z"/></svg>
</body></html>
